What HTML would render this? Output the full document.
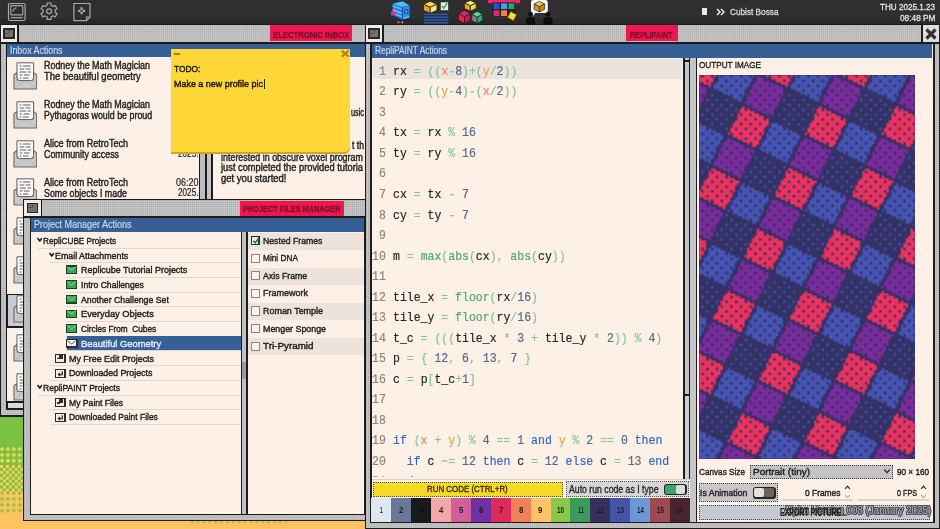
<!DOCTYPE html><html><head><meta charset="utf-8"><title>RepliPAINT</title><style>
html,body{margin:0;padding:0;overflow:hidden}
body{width:940px;height:529px;overflow:hidden;position:relative;background:#7cc242;font-family:"Liberation Sans",sans-serif}
div,span.t,span.c,svg{position:absolute}
span.t{white-space:pre;line-height:1;transform-origin:0 50%}
span.c{white-space:pre;line-height:1;font-family:"Liberation Mono",monospace;font-size:12.8px;color:#262626;transform:scaleX(.8984);transform-origin:0 0}
span.c b{font-weight:normal}
span.c{-webkit-text-stroke-width:.2px}
.dot{background-color:#d0d0d0;background-image:linear-gradient(90deg,rgba(0,0,0,.09) 50%,transparent 50%),linear-gradient(rgba(0,0,0,.09) 50%,transparent 50%);background-size:1.96px 1.96px}
</style></head><body><div id="root" style="left:0;top:0;width:940px;height:529px;overflow:hidden;will-change:transform">
<div style="left:0px;top:0px;width:940px;height:529px;background:#7cc242;"></div>
<div style="left:0px;top:447px;width:940px;height:17.6px;background-image:radial-gradient(circle at 2px 2px,#ecd750 1.5px,transparent 1.9px);background-size:5.9px 5.9px;"></div>
<div style="left:0px;top:464.5px;width:940px;height:26px;background:conic-gradient(#7cc242 25%,#f3cf58 0 50%,#7cc242 0 75%,#f3cf58 0) 0 0/5.9px 5.9px;"></div>
<div style="left:0px;top:490.5px;width:940px;height:40px;background:#ffc460;"></div>
<div style="left:0px;top:490.5px;width:940px;height:23.6px;background-image:radial-gradient(circle at 2px 2px,#98c446 1.5px,transparent 1.9px);background-size:5.9px 5.9px;"></div>
<div style="left:190px;top:519.5px;width:97px;height:4px;background-image:radial-gradient(circle at 2px 2px,#a2c548 1.3px,transparent 1.7px);background-size:5.9px 5.9px;"></div>
<div style="left:0px;top:0px;width:940px;height:24px;background:#2f2f2f;"></div>
<div style="left:0px;top:19px;width:940px;height:5px;background:#292929;"></div>
<div style="left:0px;top:23.7px;width:940px;height:1.3px;background:#141414;"></div>
<div style="left:0px;top:24px;width:372px;height:392.5px;background:#1c1c1c;"></div>
<div class="dot" style="left:1px;top:25px;width:370px;height:17px;"></div>
<div style="left:1px;top:25px;width:16.3px;height:17px;background:#ececec;"></div>
<div style="left:3.2px;top:28.1px;width:11.8px;height:10.8px;background:#2a2624;"></div>
<div style="left:4.8px;top:29.6px;width:8.6px;height:7.8px;background:#77716c;"></div>
<div style="left:8.5px;top:29.6px;width:1px;height:3.5px;background:#56504c;"></div>
<div style="left:4.8px;top:32.9px;width:4.5px;height:1px;background:#56504c;"></div>
<div style="left:17.3px;top:25px;width:1.5px;height:17px;background:#1c1c1c;"></div>
<div class="dot" style="left:1px;top:43.5px;width:370px;height:371.5px;"></div>
<div style="left:5.5px;top:43.5px;width:360.5px;height:366.3px;background:#1c1c1c;"></div>
<div style="left:7px;top:43.5px;width:357.5px;height:364.8px;background:#fdf1e7;"></div>
<div style="left:7px;top:43.5px;width:357.5px;height:13.8px;background:#365f96;"></div>
<span class="t" style="transform:scaleX(0.883);left:10px;top:46px;font-size:10px;color:#c9d6ea;-webkit-text-stroke:0.2px #c9d6ea;">Inbox Actions</span>
<div style="left:269.6px;top:25.4px;width:82.6px;height:15.8px;background:#ee184f;"></div>
<span class="t" style="transform:scaleX(0.827);left:273px;top:31px;font-size:9.3px;color:#7f0c30;font-weight:bold;-webkit-text-stroke:0.3px #7f0c30;">ELECTRONIC INBOX</span>
<div style="left:7px;top:294px;width:18px;height:33.5px;background:#1c1c1c;"></div>
<div style="left:8.2px;top:295.2px;width:17px;height:31px;background:#c9c9d1;"></div>
<svg style="left:12.6px;top:61.7px" width="24.6" height="28" viewBox="0 0 26 28" preserveAspectRatio="none">
<path d="M1 12.8 L4.5 10.3 L4.5 18 L21.5 18 L21.5 10.3 L25 12.8 L25 27 L1 27 Z" fill="#cacaca" stroke="#666" stroke-width="1.1"/>
<path d="M4.2 0.8 H21.8 V15.5 Q21.8 18.6 18.8 18.6 H7.2 Q4.2 18.6 4.2 15.5 Z" fill="#fbfbfb" stroke="#5a5a5a" stroke-width="1"/>
<path d="M7 4h2M10.5 4h8M7 7h5M13.5 7h5M7 10h7M15.5 10h3.5M7 13h3M11.5 13h6M7 16h2M10.5 16h6" stroke="#5c5c5c" stroke-width="1"/>
<path d="M2 26 L10 20 H16 L24 26" fill="none" stroke="#b6b6b6" stroke-width="1"/>
</svg>
<span class="t" style="transform:scaleX(0.883);left:44px;top:61px;font-size:10.1px;color:#222;-webkit-text-stroke:0.4px #222;">Rodney the Math Magician</span>
<span class="t" style="transform:scaleX(0.938);left:44px;top:72px;font-size:10.1px;color:#222;-webkit-text-stroke:0.4px #222;">The beautiful geometry</span>
<svg style="left:12.6px;top:100.6px" width="24.6" height="28" viewBox="0 0 26 28" preserveAspectRatio="none">
<path d="M1 12.8 L4.5 10.3 L4.5 18 L21.5 18 L21.5 10.3 L25 12.8 L25 27 L1 27 Z" fill="#cacaca" stroke="#666" stroke-width="1.1"/>
<path d="M4.2 0.8 H21.8 V15.5 Q21.8 18.6 18.8 18.6 H7.2 Q4.2 18.6 4.2 15.5 Z" fill="#fbfbfb" stroke="#5a5a5a" stroke-width="1"/>
<path d="M7 4h2M10.5 4h8M7 7h5M13.5 7h5M7 10h7M15.5 10h3.5M7 13h3M11.5 13h6M7 16h2M10.5 16h6" stroke="#5c5c5c" stroke-width="1"/>
<path d="M2 26 L10 20 H16 L24 26" fill="none" stroke="#b6b6b6" stroke-width="1"/>
</svg>
<span class="t" style="transform:scaleX(0.883);left:44px;top:100px;font-size:10.1px;color:#222;-webkit-text-stroke:0.4px #222;">Rodney the Math Magician</span>
<span class="t" style="transform:scaleX(0.881);left:44px;top:111px;font-size:10.1px;color:#222;-webkit-text-stroke:0.4px #222;">Pythagoras would be proud</span>
<svg style="left:12.6px;top:139.5px" width="24.6" height="28" viewBox="0 0 26 28" preserveAspectRatio="none">
<path d="M1 12.8 L4.5 10.3 L4.5 18 L21.5 18 L21.5 10.3 L25 12.8 L25 27 L1 27 Z" fill="#cacaca" stroke="#666" stroke-width="1.1"/>
<path d="M4.2 0.8 H21.8 V15.5 Q21.8 18.6 18.8 18.6 H7.2 Q4.2 18.6 4.2 15.5 Z" fill="#fbfbfb" stroke="#5a5a5a" stroke-width="1"/>
<path d="M7 4h2M10.5 4h8M7 7h5M13.5 7h5M7 10h7M15.5 10h3.5M7 13h3M11.5 13h6M7 16h2M10.5 16h6" stroke="#5c5c5c" stroke-width="1"/>
<path d="M2 26 L10 20 H16 L24 26" fill="none" stroke="#b6b6b6" stroke-width="1"/>
</svg>
<span class="t" style="transform:scaleX(0.897);left:44px;top:139px;font-size:10.1px;color:#222;-webkit-text-stroke:0.4px #222;">Alice from RetroTech</span>
<span class="t" style="transform:scaleX(0.880);left:44px;top:150px;font-size:10.1px;color:#222;-webkit-text-stroke:0.4px #222;">Community access</span>
<svg style="left:12.6px;top:178.39999999999998px" width="24.6" height="28" viewBox="0 0 26 28" preserveAspectRatio="none">
<path d="M1 12.8 L4.5 10.3 L4.5 18 L21.5 18 L21.5 10.3 L25 12.8 L25 27 L1 27 Z" fill="#cacaca" stroke="#666" stroke-width="1.1"/>
<path d="M4.2 0.8 H21.8 V15.5 Q21.8 18.6 18.8 18.6 H7.2 Q4.2 18.6 4.2 15.5 Z" fill="#fbfbfb" stroke="#5a5a5a" stroke-width="1"/>
<path d="M7 4h2M10.5 4h8M7 7h5M13.5 7h5M7 10h7M15.5 10h3.5M7 13h3M11.5 13h6M7 16h2M10.5 16h6" stroke="#5c5c5c" stroke-width="1"/>
<path d="M2 26 L10 20 H16 L24 26" fill="none" stroke="#b6b6b6" stroke-width="1"/>
</svg>
<span class="t" style="transform:scaleX(0.897);left:44px;top:178px;font-size:10.1px;color:#222;-webkit-text-stroke:0.4px #222;">Alice from RetroTech</span>
<span class="t" style="transform:scaleX(0.875);left:44px;top:189px;font-size:10.1px;color:#222;-webkit-text-stroke:0.4px #222;">Some objects I made</span>
<svg style="left:12.6px;top:217.3px" width="24.6" height="28" viewBox="0 0 26 28" preserveAspectRatio="none">
<path d="M1 12.8 L4.5 10.3 L4.5 18 L21.5 18 L21.5 10.3 L25 12.8 L25 27 L1 27 Z" fill="#cacaca" stroke="#666" stroke-width="1.1"/>
<path d="M4.2 0.8 H21.8 V15.5 Q21.8 18.6 18.8 18.6 H7.2 Q4.2 18.6 4.2 15.5 Z" fill="#fbfbfb" stroke="#5a5a5a" stroke-width="1"/>
<path d="M7 4h2M10.5 4h8M7 7h5M13.5 7h5M7 10h7M15.5 10h3.5M7 13h3M11.5 13h6M7 16h2M10.5 16h6" stroke="#5c5c5c" stroke-width="1"/>
<path d="M2 26 L10 20 H16 L24 26" fill="none" stroke="#b6b6b6" stroke-width="1"/>
</svg>
<svg style="left:12.6px;top:256.2px" width="24.6" height="28" viewBox="0 0 26 28" preserveAspectRatio="none">
<path d="M1 12.8 L4.5 10.3 L4.5 18 L21.5 18 L21.5 10.3 L25 12.8 L25 27 L1 27 Z" fill="#cacaca" stroke="#666" stroke-width="1.1"/>
<path d="M4.2 0.8 H21.8 V15.5 Q21.8 18.6 18.8 18.6 H7.2 Q4.2 18.6 4.2 15.5 Z" fill="#fbfbfb" stroke="#5a5a5a" stroke-width="1"/>
<path d="M7 4h2M10.5 4h8M7 7h5M13.5 7h5M7 10h7M15.5 10h3.5M7 13h3M11.5 13h6M7 16h2M10.5 16h6" stroke="#5c5c5c" stroke-width="1"/>
<path d="M2 26 L10 20 H16 L24 26" fill="none" stroke="#b6b6b6" stroke-width="1"/>
</svg>
<svg style="left:12.6px;top:295.09999999999997px" width="24.6" height="28" viewBox="0 0 26 28" preserveAspectRatio="none">
<path d="M1 12.8 L4.5 10.3 L4.5 18 L21.5 18 L21.5 10.3 L25 12.8 L25 27 L1 27 Z" fill="#cacaca" stroke="#666" stroke-width="1.1"/>
<path d="M4.2 0.8 H21.8 V15.5 Q21.8 18.6 18.8 18.6 H7.2 Q4.2 18.6 4.2 15.5 Z" fill="#fbfbfb" stroke="#5a5a5a" stroke-width="1"/>
<path d="M7 4h2M10.5 4h8M7 7h5M13.5 7h5M7 10h7M15.5 10h3.5M7 13h3M11.5 13h6M7 16h2M10.5 16h6" stroke="#5c5c5c" stroke-width="1"/>
<path d="M2 26 L10 20 H16 L24 26" fill="none" stroke="#b6b6b6" stroke-width="1"/>
</svg>
<svg style="left:12.6px;top:334.0px" width="24.6" height="28" viewBox="0 0 26 28" preserveAspectRatio="none">
<path d="M1 12.8 L4.5 10.3 L4.5 18 L21.5 18 L21.5 10.3 L25 12.8 L25 27 L1 27 Z" fill="#cacaca" stroke="#666" stroke-width="1.1"/>
<path d="M4.2 0.8 H21.8 V15.5 Q21.8 18.6 18.8 18.6 H7.2 Q4.2 18.6 4.2 15.5 Z" fill="#fbfbfb" stroke="#5a5a5a" stroke-width="1"/>
<path d="M7 4h2M10.5 4h8M7 7h5M13.5 7h5M7 10h7M15.5 10h3.5M7 13h3M11.5 13h6M7 16h2M10.5 16h6" stroke="#5c5c5c" stroke-width="1"/>
<path d="M2 26 L10 20 H16 L24 26" fill="none" stroke="#b6b6b6" stroke-width="1"/>
</svg>
<svg style="left:12.6px;top:372.9px" width="24.6" height="28" viewBox="0 0 26 28" preserveAspectRatio="none">
<path d="M1 12.8 L4.5 10.3 L4.5 18 L21.5 18 L21.5 10.3 L25 12.8 L25 27 L1 27 Z" fill="#cacaca" stroke="#666" stroke-width="1.1"/>
<path d="M4.2 0.8 H21.8 V15.5 Q21.8 18.6 18.8 18.6 H7.2 Q4.2 18.6 4.2 15.5 Z" fill="#fbfbfb" stroke="#5a5a5a" stroke-width="1"/>
<path d="M7 4h2M10.5 4h8M7 7h5M13.5 7h5M7 10h7M15.5 10h3.5M7 13h3M11.5 13h6M7 16h2M10.5 16h6" stroke="#5c5c5c" stroke-width="1"/>
<path d="M2 26 L10 20 H16 L24 26" fill="none" stroke="#b6b6b6" stroke-width="1"/>
</svg>
<span class="t" style="transform:scaleX(0.852);left:175.6px;top:177px;font-size:10.5px;color:#222;-webkit-text-stroke:0.2px #222;">06:20</span>
<span class="t" style="transform:scaleX(0.780);left:177.5px;top:187px;font-size:10.5px;color:#222;-webkit-text-stroke:0.2px #222;">2025.</span>
<span class="t" style="transform:scaleX(0.780);left:177.5px;top:148px;font-size:10.5px;color:#222;-webkit-text-stroke:0.2px #222;">2025.</span>
<div style="left:199px;top:58px;width:7.5px;height:343px;background:#1c1c1c;"></div>
<div style="left:200.3px;top:58px;width:4.7px;height:343px;background:#bcbcc2;"></div>
<div style="left:210.5px;top:58px;width:2px;height:343px;background:#1c1c1c;"></div>
<div style="left:206.5px;top:58px;width:4px;height:343px;background:#c4c4c4;"></div>
<span class="t" style="transform:scaleX(0.730);left:351px;top:108px;font-size:10px;color:#222;-webkit-text-stroke:0.4px #222;">usic</span>
<span class="t" style="transform:scaleX(0.863);left:352px;top:141px;font-size:10px;color:#222;-webkit-text-stroke:0.4px #222;">t th</span>
<span class="t" style="transform:scaleX(0.893);left:220.8px;top:153px;font-size:10px;color:#222;-webkit-text-stroke:0.4px #222;">interested in obscure voxel program</span>
<span class="t" style="transform:scaleX(0.929);left:220.8px;top:163px;font-size:10px;color:#222;-webkit-text-stroke:0.4px #222;">just completed the provided tutoria</span>
<span class="t" style="transform:scaleX(0.950);left:220.8px;top:174px;font-size:10px;color:#222;-webkit-text-stroke:0.4px #222;">get you started!</span>
<div style="left:7px;top:401px;width:18px;height:1.6px;background:#1c1c1c;"></div>
<div style="left:7px;top:402.6px;width:18px;height:5.8px;background:#d9d9db;"></div>
<div style="left:7px;top:402.5px;width:1.2px;height:5.9px;background:#1c1c1c;"></div>
<div style="left:170.6px;top:48.7px;width:179.8px;height:105px;background:#c9a822;border-radius:0 0 6px 0;"></div>
<div style="left:170.6px;top:48.7px;width:179.8px;height:103.6px;background:#ffd838;border-radius:0 0 6px 0;"></div>
<div style="left:173.5px;top:53.1px;width:6.5px;height:2.1px;background:#b9790f;"></div>
<span class="t" style="transform:scaleX(1.119);left:340.5px;top:47px;font-size:13px;color:#b9790f;font-weight:bold;-webkit-text-stroke:0.6px #b9790f;">×</span>
<span class="t" style="transform:scaleX(0.874);left:174.2px;top:64px;font-size:9.6px;color:#1e1a08;-webkit-text-stroke:0.45px #1e1a08;">TODO:</span>
<span class="t" style="transform:scaleX(0.932);left:174.2px;top:79px;font-size:9.6px;color:#1e1a08;-webkit-text-stroke:0.45px #1e1a08;">Make a new profile pic</span>
<div style="left:263.8px;top:78.5px;width:1px;height:10.5px;background:#2a2410;"></div>
<div style="left:23.2px;top:199px;width:348.8px;height:322px;background:#1c1c1c;"></div>
<div class="dot" style="left:24.4px;top:200px;width:346.4px;height:16px;"></div>
<div style="left:24.4px;top:200px;width:16.3px;height:16px;background:#ececec;"></div>
<div style="left:26.6px;top:202.6px;width:11.8px;height:10.8px;background:#2a2624;"></div>
<div style="left:28.2px;top:204.1px;width:8.6px;height:7.8px;background:#77716c;"></div>
<div style="left:31.9px;top:204.1px;width:1px;height:3.5px;background:#56504c;"></div>
<div style="left:28.2px;top:207.4px;width:4.5px;height:1px;background:#56504c;"></div>
<div style="left:40.7px;top:200px;width:1.5px;height:16px;background:#1c1c1c;"></div>
<div class="dot" style="left:24.4px;top:217.5px;width:346.4px;height:302px;"></div>
<div style="left:29.7px;top:217.5px;width:336.3px;height:297.5px;background:#1c1c1c;"></div>
<div style="left:31.2px;top:217.5px;width:333.3px;height:296px;background:#fdf1e7;"></div>
<div style="left:31.2px;top:217.5px;width:333.3px;height:14px;background:#365f96;"></div>
<span class="t" style="transform:scaleX(0.900);left:33.6px;top:220px;font-size:10px;color:#c9d6ea;-webkit-text-stroke:0.2px #c9d6ea;">Project Manager Actions</span>
<div style="left:240px;top:201px;width:104px;height:15px;background:#ee184f;"></div>
<span class="t" style="transform:scaleX(0.790);left:242.7px;top:205px;font-size:9.3px;color:#7f0c30;font-weight:bold;-webkit-text-stroke:0.3px #7f0c30;">PROJECT FILES MANAGER</span>
<div style="left:247.5px;top:232.5px;width:116px;height:17.3px;background:#ece4dc;"></div>
<div style="left:247.5px;top:267.7px;width:116px;height:17.3px;background:#ece4dc;"></div>
<div style="left:247.5px;top:302.9px;width:116px;height:17.3px;background:#ece4dc;"></div>
<div style="left:247.5px;top:338.1px;width:116px;height:17.3px;background:#ece4dc;"></div>
<div style="left:240.5px;top:232px;width:7px;height:281.5px;background:#1c1c1c;"></div>
<div style="left:242px;top:232px;width:4px;height:281.5px;background:#bfc1c7;"></div>
<div style="left:242px;top:361.5px;width:4px;height:17.5px;background:#9a9a9c;"></div>
<div style="left:37.5px;top:247.5px;width:203px;height:1px;background:#e0d8d0;"></div>
<svg style="left:36.5px;top:237.3px" width="5.6" height="5.4" viewBox="0 0 5 5"><path d="M0.3 1 L2.5 3.6 L4.7 1" fill="none" stroke="#222" stroke-width="1.5"/></svg>
<span class="t" style="transform:scaleX(0.833);left:42.6px;top:236px;font-size:9.8px;color:#222;-webkit-text-stroke:0.42px #222;">RepliCUBE Projects</span>
<div style="left:49.5px;top:262.2px;width:191px;height:1px;background:#e0d8d0;"></div>
<svg style="left:48.5px;top:252.00000000000003px" width="5.6" height="5.4" viewBox="0 0 5 5"><path d="M0.3 1 L2.5 3.6 L4.7 1" fill="none" stroke="#222" stroke-width="1.5"/></svg>
<span class="t" style="transform:scaleX(0.903);left:54.6px;top:251px;font-size:9.8px;color:#222;-webkit-text-stroke:0.42px #222;">Email Attachments</span>
<div style="left:66px;top:276.9px;width:174.5px;height:1px;background:#e0d8d0;"></div>
<div style="left:66.2px;top:265.4px;width:11px;height:8.8px;background:#163f20;"></div>
<div style="left:67.4px;top:266.6px;width:8.6px;height:6.4px;background:#3aa652;"></div>
<svg style="left:67.3px;top:266.3px" width="9" height="7" viewBox="0 0 9 7"><path d="M0.5 0.8 L4.5 4 L8.5 0.8" fill="none" stroke="#8fe0a0" stroke-width="1"/></svg>
<span class="t" style="transform:scaleX(0.912);left:80.9px;top:265px;font-size:9.8px;color:#222;-webkit-text-stroke:0.42px #222;">Replicube Tutorial Projects</span>
<div style="left:66px;top:291.6px;width:174.5px;height:1px;background:#e0d8d0;"></div>
<div style="left:66.2px;top:280.1px;width:11px;height:8.8px;background:#163f20;"></div>
<div style="left:67.4px;top:281.3px;width:8.6px;height:6.4px;background:#3aa652;"></div>
<svg style="left:67.3px;top:281.0px" width="9" height="7" viewBox="0 0 9 7"><path d="M0.5 0.8 L4.5 4 L8.5 0.8" fill="none" stroke="#8fe0a0" stroke-width="1"/></svg>
<span class="t" style="transform:scaleX(0.880);left:80.9px;top:280px;font-size:9.8px;color:#222;-webkit-text-stroke:0.42px #222;">Intro Challenges</span>
<div style="left:66px;top:306.3px;width:174.5px;height:1px;background:#e0d8d0;"></div>
<div style="left:66.2px;top:294.8px;width:11px;height:8.8px;background:#163f20;"></div>
<div style="left:67.4px;top:296px;width:8.6px;height:6.4px;background:#3aa652;"></div>
<svg style="left:67.3px;top:295.7px" width="9" height="7" viewBox="0 0 9 7"><path d="M0.5 0.8 L4.5 4 L8.5 0.8" fill="none" stroke="#8fe0a0" stroke-width="1"/></svg>
<span class="t" style="transform:scaleX(0.891);left:80.9px;top:295px;font-size:9.8px;color:#222;-webkit-text-stroke:0.42px #222;">Another Challenge Set</span>
<div style="left:66px;top:321px;width:174.5px;height:1px;background:#e0d8d0;"></div>
<div style="left:66.2px;top:309.5px;width:11px;height:8.8px;background:#163f20;"></div>
<div style="left:67.4px;top:310.7px;width:8.6px;height:6.4px;background:#3aa652;"></div>
<svg style="left:67.3px;top:310.4px" width="9" height="7" viewBox="0 0 9 7"><path d="M0.5 0.8 L4.5 4 L8.5 0.8" fill="none" stroke="#8fe0a0" stroke-width="1"/></svg>
<span class="t" style="transform:scaleX(0.948);left:80.9px;top:309px;font-size:9.8px;color:#222;-webkit-text-stroke:0.42px #222;">Everyday Objects</span>
<div style="left:66px;top:335.7px;width:174.5px;height:1px;background:#e0d8d0;"></div>
<div style="left:66.2px;top:324.2px;width:11px;height:8.8px;background:#163f20;"></div>
<div style="left:67.4px;top:325.4px;width:8.6px;height:6.4px;background:#3aa652;"></div>
<svg style="left:67.3px;top:325.1px" width="9" height="7" viewBox="0 0 9 7"><path d="M0.5 0.8 L4.5 4 L8.5 0.8" fill="none" stroke="#8fe0a0" stroke-width="1"/></svg>
<span class="t" style="transform:scaleX(0.841);left:80.9px;top:324px;font-size:9.8px;color:#222;-webkit-text-stroke:0.42px #222;">Circles From  Cubes</span>
<div style="left:66px;top:350.4px;width:174.5px;height:1px;background:#e0d8d0;"></div>
<div style="left:66.5px;top:336.2px;width:174px;height:14.2px;background:#365f96;"></div>
<div style="left:66px;top:338.5px;width:11.6px;height:9.3px;background:#2b2b2b;"></div>
<div style="left:67.3px;top:339.8px;width:9px;height:6.7px;background:#f4f4f4;"></div>
<svg style="left:67.3px;top:339.8px" width="9" height="7" viewBox="0 0 9 7"><path d="M0.5 0.8 L4.5 4 L8.5 0.8" fill="none" stroke="#555" stroke-width="1"/></svg>
<span class="t" style="transform:scaleX(0.955);left:80.9px;top:339px;font-size:9.8px;color:#dfe8f5;-webkit-text-stroke:0.42px #dfe8f5;">Beautiful Geometry</span>
<div style="left:49.5px;top:365.1px;width:191px;height:1px;background:#e0d8d0;"></div>
<div style="left:54.7px;top:353.8px;width:11px;height:9.3px;background:#2b2b2b;"></div>
<div style="left:55.9px;top:355px;width:8.6px;height:6.9px;background:#f2efec;"></div>
<div style="left:58.7px;top:355px;width:4.5px;height:4px;background:#2b2b2b;"></div>
<div style="left:57.2px;top:358.3px;width:3px;height:1.2px;background:#2b2b2b;"></div>
<span class="t" style="transform:scaleX(0.908);left:68.8px;top:354px;font-size:9.8px;color:#222;-webkit-text-stroke:0.42px #222;">My Free Edit Projects</span>
<div style="left:49.5px;top:379.8px;width:191px;height:1px;background:#e0d8d0;"></div>
<div style="left:54.7px;top:368.5px;width:11px;height:9.3px;background:#2b2b2b;"></div>
<div style="left:55.9px;top:369.7px;width:8.6px;height:6.9px;background:#f2efec;"></div>
<svg style="left:55.900000000000006px;top:369.7px" width="9" height="7" viewBox="0 0 9 7"><path d="M6.3 1.2 V4.6 H2.5 M4 3 L2.4 4.6 L4 6.2" fill="none" stroke="#2b2b2b" stroke-width="1.2"/></svg>
<span class="t" style="transform:scaleX(0.900);left:68.8px;top:368px;font-size:9.8px;color:#222;-webkit-text-stroke:0.42px #222;">Downloaded Projects</span>
<div style="left:37.5px;top:394.5px;width:203px;height:1px;background:#e0d8d0;"></div>
<svg style="left:36.5px;top:384.29999999999995px" width="5.6" height="5.4" viewBox="0 0 5 5"><path d="M0.3 1 L2.5 3.6 L4.7 1" fill="none" stroke="#222" stroke-width="1.5"/></svg>
<span class="t" style="transform:scaleX(0.871);left:42.6px;top:383px;font-size:9.8px;color:#222;-webkit-text-stroke:0.42px #222;">RepliPAINT Projects</span>
<div style="left:49.5px;top:409.2px;width:191px;height:1px;background:#e0d8d0;"></div>
<div style="left:54.7px;top:397.9px;width:11px;height:9.3px;background:#2b2b2b;"></div>
<div style="left:55.9px;top:399.1px;width:8.6px;height:6.9px;background:#f2efec;"></div>
<div style="left:58.7px;top:399.1px;width:4.5px;height:4px;background:#2b2b2b;"></div>
<div style="left:57.2px;top:402.4px;width:3px;height:1.2px;background:#2b2b2b;"></div>
<span class="t" style="transform:scaleX(0.878);left:68.8px;top:398px;font-size:9.8px;color:#222;-webkit-text-stroke:0.42px #222;">My Paint Files</span>
<div style="left:49.5px;top:423.9px;width:191px;height:1px;background:#e0d8d0;"></div>
<div style="left:54.7px;top:412.6px;width:11px;height:9.3px;background:#2b2b2b;"></div>
<div style="left:55.9px;top:413.8px;width:8.6px;height:6.9px;background:#f2efec;"></div>
<svg style="left:55.900000000000006px;top:413.79999999999995px" width="9" height="7" viewBox="0 0 9 7"><path d="M6.3 1.2 V4.6 H2.5 M4 3 L2.4 4.6 L4 6.2" fill="none" stroke="#2b2b2b" stroke-width="1.2"/></svg>
<span class="t" style="transform:scaleX(0.863);left:68.8px;top:412px;font-size:9.8px;color:#222;-webkit-text-stroke:0.42px #222;">Downloaded Paint Files</span>
<div style="left:250.5px;top:236px;width:9.2px;height:9.2px;background:#1c3a24;"></div>
<div style="left:251.8px;top:237.3px;width:6.6px;height:6.6px;background:#e6f2e4;"></div>
<svg style="left:250.5px;top:236.0px" width="10" height="10" viewBox="0 0 10 10"><path d="M2.3 4.8 L4.2 6.8 L7.8 2.3" fill="none" stroke="#1f7a3a" stroke-width="1.6"/></svg>
<span class="t" style="transform:scaleX(0.888);left:262.5px;top:236px;font-size:9.8px;color:#222;-webkit-text-stroke:0.42px #222;">Nested Frames</span>
<div style="left:250.5px;top:253.6px;width:9.2px;height:9.2px;background:#8a8682;"></div>
<div style="left:251.5px;top:254.6px;width:7.2px;height:7.2px;background:#fbf3ea;"></div>
<span class="t" style="transform:scaleX(0.846);left:262.5px;top:253px;font-size:9.8px;color:#222;-webkit-text-stroke:0.42px #222;">Mini DNA</span>
<div style="left:250.5px;top:271.2px;width:9.2px;height:9.2px;background:#8a8682;"></div>
<div style="left:251.5px;top:272.2px;width:7.2px;height:7.2px;background:#fbf3ea;"></div>
<span class="t" style="transform:scaleX(0.892);left:262.5px;top:271px;font-size:9.8px;color:#222;-webkit-text-stroke:0.42px #222;">Axis Frame</span>
<div style="left:250.5px;top:288.8px;width:9.2px;height:9.2px;background:#8a8682;"></div>
<div style="left:251.5px;top:289.8px;width:7.2px;height:7.2px;background:#fbf3ea;"></div>
<span class="t" style="transform:scaleX(0.918);left:262.5px;top:288px;font-size:9.8px;color:#222;-webkit-text-stroke:0.42px #222;">Framework</span>
<div style="left:250.5px;top:306.4px;width:9.2px;height:9.2px;background:#8a8682;"></div>
<div style="left:251.5px;top:307.4px;width:7.2px;height:7.2px;background:#fbf3ea;"></div>
<span class="t" style="transform:scaleX(0.913);left:262.5px;top:306px;font-size:9.8px;color:#222;-webkit-text-stroke:0.42px #222;">Roman Temple</span>
<div style="left:250.5px;top:324px;width:9.2px;height:9.2px;background:#8a8682;"></div>
<div style="left:251.5px;top:325px;width:7.2px;height:7.2px;background:#fbf3ea;"></div>
<span class="t" style="transform:scaleX(0.904);left:262.5px;top:324px;font-size:9.8px;color:#222;-webkit-text-stroke:0.42px #222;">Menger Sponge</span>
<div style="left:250.5px;top:341.6px;width:9.2px;height:9.2px;background:#8a8682;"></div>
<div style="left:251.5px;top:342.6px;width:7.2px;height:7.2px;background:#fbf3ea;"></div>
<span class="t" style="transform:scaleX(1.005);left:262.5px;top:341px;font-size:9.8px;color:#222;-webkit-text-stroke:0.42px #222;">Tri-Pyramid</span>
<div style="left:364.5px;top:24px;width:576px;height:505px;background:#1c1c1c;"></div>
<div class="dot" style="left:366px;top:25px;width:573px;height:17px;"></div>
<div style="left:366px;top:25px;width:16.3px;height:17px;background:#ececec;"></div>
<div style="left:368.2px;top:28.1px;width:11.8px;height:10.8px;background:#2a2624;"></div>
<div style="left:369.8px;top:29.6px;width:8.6px;height:7.8px;background:#77716c;"></div>
<div style="left:373.5px;top:29.6px;width:1px;height:3.5px;background:#56504c;"></div>
<div style="left:369.8px;top:32.9px;width:4.5px;height:1px;background:#56504c;"></div>
<div style="left:382.3px;top:25px;width:1.5px;height:17px;background:#1c1c1c;"></div>
<div class="dot" style="left:366px;top:43.5px;width:573px;height:484px;"></div>
<div style="left:370px;top:43.5px;width:564.7px;height:479.5px;background:#1c1c1c;"></div>
<div style="left:371.5px;top:43.5px;width:561.7px;height:478px;background:#fdf1e7;"></div>
<div style="left:371.5px;top:43.5px;width:560.4px;height:14px;background:#365f96;"></div>
<span class="t" style="transform:scaleX(0.834);left:374.5px;top:46px;font-size:10px;color:#c9d6ea;-webkit-text-stroke:0.2px #c9d6ea;">RepliPAINT Actions</span>
<div style="left:626.4px;top:25.4px;width:52px;height:15.8px;background:#ee184f;"></div>
<span class="t" style="transform:scaleX(0.784);left:630px;top:31px;font-size:9.3px;color:#7f0c30;font-weight:bold;-webkit-text-stroke:0.3px #7f0c30;">REPLIPAINT</span>
<div style="left:921.3px;top:25px;width:1.5px;height:16.5px;background:#1c1c1c;"></div>
<div style="left:922.8px;top:25px;width:16.5px;height:16.5px;background:#dedede;"></div>
<svg style="left:924px;top:26.5px" width="14" height="14" viewBox="0 0 14 14"><path d="M2.5 2.5 L11.5 11.5 M11.5 2.5 L2.5 11.5" stroke="#333" stroke-width="3.2"/></svg>
<div style="left:371.5px;top:59.2px;width:310px;height:20.3px;background:#ece4dc;"></div>
<div style="left:683.2px;top:58px;width:7px;height:421.5px;background:#1c1c1c;"></div>
<div style="left:684.6px;top:58px;width:4px;height:421.5px;background:#c1c4cb;"></div>
<div style="left:684.6px;top:60px;width:4px;height:1.5px;background:#1c1c1c;"></div>
<div style="left:684.6px;top:394.3px;width:4px;height:1.5px;background:#1c1c1c;"></div>
<div style="left:684.6px;top:395.8px;width:4px;height:83.5px;background:#cdcfd4;"></div>
<div style="left:690.2px;top:58px;width:5.5px;height:464px;background:#c6c6c6;"></div>
<div style="left:695.6px;top:58px;width:1.6px;height:464px;background:#1c1c1c;"></div>
<div style="left:371.5px;top:479.3px;width:319px;height:1.2px;background:#d9d1c8;"></div>
<div style="left:371.5px;top:58px;width:311.5px;height:419.4px;overflow:hidden;"><div style="left:-371.5px;top:-58px;width:940px;height:529px"><span class="c" style="left:379.2px;top:66px;color:#8a8682">1</span><span class="c" style="left:393px;top:66px"><b style="color:#262626">rx</b> <b style="color:#84c4a0">=</b> <b style="color:#84c4a0">(</b><b style="color:#84c4a0">(</b><b style="color:#f0885a">x</b><b style="color:#84c4a0">-</b><b style="color:#56688c">8</b><b style="color:#84c4a0">)</b><b style="color:#84c4a0">+</b><b style="color:#84c4a0">(</b><b style="color:#e2a443">y</b><b style="color:#84c4a0">/</b><b style="color:#56688c">2</b><b style="color:#84c4a0">)</b><b style="color:#84c4a0">)</b></span><span class="c" style="left:379.2px;top:86px;color:#8a8682">2</span><span class="c" style="left:393px;top:86px"><b style="color:#262626">ry</b> <b style="color:#84c4a0">=</b> <b style="color:#84c4a0">(</b><b style="color:#84c4a0">(</b><b style="color:#e2a443">y</b><b style="color:#84c4a0">-</b><b style="color:#56688c">4</b><b style="color:#84c4a0">)</b><b style="color:#84c4a0">-</b><b style="color:#84c4a0">(</b><b style="color:#f0885a">x</b><b style="color:#84c4a0">/</b><b style="color:#56688c">2</b><b style="color:#84c4a0">)</b><b style="color:#84c4a0">)</b></span><span class="c" style="left:379.2px;top:107px;color:#8a8682">3</span><span class="c" style="left:379.2px;top:127px;color:#8a8682">4</span><span class="c" style="left:393px;top:127px"><b style="color:#262626">tx</b> <b style="color:#84c4a0">=</b> <b style="color:#262626">rx</b> <b style="color:#84c4a0">%</b> <b style="color:#56688c">16</b></span><span class="c" style="left:379.2px;top:148px;color:#8a8682">5</span><span class="c" style="left:393px;top:148px"><b style="color:#262626">ty</b> <b style="color:#84c4a0">=</b> <b style="color:#262626">ry</b> <b style="color:#84c4a0">%</b> <b style="color:#56688c">16</b></span><span class="c" style="left:379.2px;top:168px;color:#8a8682">6</span><span class="c" style="left:379.2px;top:189px;color:#8a8682">7</span><span class="c" style="left:393px;top:189px"><b style="color:#262626">cx</b> <b style="color:#84c4a0">=</b> <b style="color:#262626">tx</b> <b style="color:#84c4a0">-</b> <b style="color:#56688c">7</b></span><span class="c" style="left:379.2px;top:210px;color:#8a8682">8</span><span class="c" style="left:393px;top:210px"><b style="color:#262626">cy</b> <b style="color:#84c4a0">=</b> <b style="color:#262626">ty</b> <b style="color:#84c4a0">-</b> <b style="color:#56688c">7</b></span><span class="c" style="left:379.2px;top:230px;color:#8a8682">9</span><span class="c" style="left:372.3px;top:251px;color:#8a8682">10</span><span class="c" style="left:393px;top:251px"><b style="color:#262626">m</b> <b style="color:#84c4a0">=</b> <b style="color:#48a878">max</b><b style="color:#84c4a0">(</b><b style="color:#48a878">abs</b><b style="color:#84c4a0">(</b><b style="color:#262626">cx</b><b style="color:#84c4a0">)</b><b style="color:#84c4a0">,</b> <b style="color:#48a878">abs</b><b style="color:#84c4a0">(</b><b style="color:#262626">cy</b><b style="color:#84c4a0">)</b><b style="color:#84c4a0">)</b></span><span class="c" style="left:372.3px;top:271px;color:#8a8682">11</span><span class="c" style="left:372.3px;top:292px;color:#8a8682">12</span><span class="c" style="left:393px;top:292px"><b style="color:#262626">tile_x</b> <b style="color:#84c4a0">=</b> <b style="color:#48a878">floor</b><b style="color:#84c4a0">(</b><b style="color:#262626">rx</b><b style="color:#84c4a0">/</b><b style="color:#56688c">16</b><b style="color:#84c4a0">)</b></span><span class="c" style="left:372.3px;top:312px;color:#8a8682">13</span><span class="c" style="left:393px;top:312px"><b style="color:#262626">tile_y</b> <b style="color:#84c4a0">=</b> <b style="color:#48a878">floor</b><b style="color:#84c4a0">(</b><b style="color:#262626">ry</b><b style="color:#84c4a0">/</b><b style="color:#56688c">16</b><b style="color:#84c4a0">)</b></span><span class="c" style="left:372.3px;top:333px;color:#8a8682">14</span><span class="c" style="left:393px;top:333px"><b style="color:#262626">t_c</b> <b style="color:#84c4a0">=</b> <b style="color:#84c4a0">(</b><b style="color:#84c4a0">(</b><b style="color:#84c4a0">(</b><b style="color:#262626">tile_x</b> <b style="color:#84c4a0">*</b> <b style="color:#56688c">3</b> <b style="color:#84c4a0">+</b> <b style="color:#262626">tile_y</b> <b style="color:#84c4a0">*</b> <b style="color:#56688c">2</b><b style="color:#84c4a0">)</b><b style="color:#84c4a0">)</b> <b style="color:#84c4a0">%</b> <b style="color:#56688c">4</b><b style="color:#84c4a0">)</b></span><span class="c" style="left:372.3px;top:353px;color:#8a8682">15</span><span class="c" style="left:393px;top:353px"><b style="color:#262626">p</b> <b style="color:#84c4a0">=</b> <b style="color:#84c4a0">{</b> <b style="color:#56688c">12</b><b style="color:#84c4a0">,</b> <b style="color:#56688c">6</b><b style="color:#84c4a0">,</b> <b style="color:#56688c">13</b><b style="color:#84c4a0">,</b> <b style="color:#56688c">7</b> <b style="color:#84c4a0">}</b></span><span class="c" style="left:372.3px;top:374px;color:#8a8682">16</span><span class="c" style="left:393px;top:374px"><b style="color:#262626">c</b> <b style="color:#84c4a0">=</b> <b style="color:#262626">p</b><b style="color:#84c4a0">[</b><b style="color:#262626">t_c</b><b style="color:#84c4a0">+</b><b style="color:#56688c">1</b><b style="color:#84c4a0">]</b></span><span class="c" style="left:372.3px;top:394px;color:#8a8682">17</span><span class="c" style="left:372.3px;top:415px;color:#8a8682">18</span><span class="c" style="left:372.3px;top:435px;color:#8a8682">19</span><span class="c" style="left:393px;top:435px"><b style="color:#3366c8">if</b> <b style="color:#84c4a0">(</b><b style="color:#f0885a">x</b> <b style="color:#84c4a0">+</b> <b style="color:#e2a443">y</b><b style="color:#84c4a0">)</b> <b style="color:#84c4a0">%</b> <b style="color:#56688c">4</b> <b style="color:#84c4a0">=</b><b style="color:#84c4a0">=</b> <b style="color:#56688c">1</b> <b style="color:#3366c8">and</b> <b style="color:#e2a443">y</b> <b style="color:#84c4a0">%</b> <b style="color:#56688c">2</b> <b style="color:#84c4a0">=</b><b style="color:#84c4a0">=</b> <b style="color:#56688c">0</b> <b style="color:#3366c8">then</b></span><span class="c" style="left:372.3px;top:456px;color:#8a8682">20</span><span class="c" style="left:393px;top:456px">  <b style="color:#3366c8">if</b> <b style="color:#262626">c</b> <b style="color:#84c4a0">~</b><b style="color:#84c4a0">=</b> <b style="color:#56688c">12</b> <b style="color:#3366c8">then</b> <b style="color:#262626">c</b> <b style="color:#84c4a0">=</b> <b style="color:#56688c">12</b> <b style="color:#3366c8">else</b> <b style="color:#262626">c</b> <b style="color:#84c4a0">=</b> <b style="color:#56688c">13</b> <b style="color:#3366c8">end</b></span><span class="c" style="left:372.3px;top:476px;color:#8a8682">21</span><span class="c" style="left:393px;top:476px"><b style="color:#3366c8">end</b></span></div></div>
<div style="left:373.3px;top:481.5px;width:189.5px;height:15.3px;background:#f6d925;outline:1px dotted #5c5210;outline-offset:-1px;"></div>
<span class="t" style="transform:scaleX(0.845);left:427px;top:484px;font-size:9.4px;color:#2a2608;-webkit-text-stroke:0.3px #2a2608;">RUN CODE (CTRL+R)</span>
<div style="left:566px;top:481.3px;width:123px;height:15.5px;background:#d9d7d6;outline:1px dotted #555;outline-offset:-1px;"></div>
<span class="t" style="transform:scaleX(0.870);left:569px;top:485px;font-size:10px;color:#222;-webkit-text-stroke:0.3px #222;">Auto run code as I type</span>
<div style="left:663.5px;top:484px;width:23px;height:11px;background:#23262a;border-radius:3px;"></div>
<div style="left:664.8px;top:485.3px;width:20.4px;height:8.4px;background:#3aa862;border-radius:2px;"></div>
<div style="left:675.5px;top:485.3px;width:9.7px;height:8.4px;background:#dcdcdc;border-radius:2px;"></div>
<div style="left:371.4px;top:498px;width:20px;height:24px;background:#dfe7f2;"></div>
<span class="t" style="transform:scaleX(0.491);left:380.1px;top:505px;font-size:9.5px;color:#1d1d22;font-weight:bold;">1</span>
<div style="left:391.3px;top:498px;width:20px;height:24px;background:#6a7796;"></div>
<span class="t" style="transform:scaleX(0.831);left:399.1px;top:505px;font-size:9.5px;color:#1d1d22;font-weight:bold;">2</span>
<div style="left:411.2px;top:498px;width:20px;height:24px;background:#17191b;"></div>
<span class="t" style="transform:scaleX(0.831);left:419px;top:505px;font-size:9.5px;color:#0c0c0c;font-weight:bold;">3</span>
<div style="left:431.1px;top:498px;width:20px;height:24px;background:#f4a6a8;"></div>
<span class="t" style="transform:scaleX(0.831);left:438.9px;top:505px;font-size:9.5px;color:#1d1d22;font-weight:bold;">4</span>
<div style="left:451px;top:498px;width:20px;height:24px;background:#d0609c;"></div>
<span class="t" style="transform:scaleX(0.831);left:458.8px;top:505px;font-size:9.5px;color:#1d1d22;font-weight:bold;">5</span>
<div style="left:470.9px;top:498px;width:20px;height:24px;background:#7030a2;"></div>
<span class="t" style="transform:scaleX(0.831);left:478.7px;top:505px;font-size:9.5px;color:#1d1d22;font-weight:bold;">6</span>
<div style="left:490.8px;top:498px;width:20px;height:24px;background:#e12a5c;"></div>
<span class="t" style="transform:scaleX(0.831);left:498.6px;top:505px;font-size:9.5px;color:#1d1d22;font-weight:bold;">7</span>
<div style="left:510.7px;top:498px;width:20px;height:24px;background:#f08058;"></div>
<span class="t" style="transform:scaleX(0.831);left:518.5px;top:505px;font-size:9.5px;color:#1d1d22;font-weight:bold;">8</span>
<div style="left:530.6px;top:498px;width:20px;height:24px;background:#ffc468;"></div>
<span class="t" style="transform:scaleX(0.831);left:538.4px;top:505px;font-size:9.5px;color:#1d1d22;font-weight:bold;">9</span>
<div style="left:550.5px;top:498px;width:20px;height:24px;background:#88c848;"></div>
<span class="t" style="transform:scaleX(0.662);left:557px;top:505px;font-size:9.5px;color:#1d1d22;font-weight:bold;">10</span>
<div style="left:570.4px;top:498px;width:20px;height:24px;background:#3a9c58;"></div>
<span class="t" style="transform:scaleX(0.557);left:577.6px;top:505px;font-size:9.5px;color:#1d1d22;font-weight:bold;">11</span>
<div style="left:590.3px;top:498px;width:20px;height:24px;background:#35305e;"></div>
<span class="t" style="transform:scaleX(0.662);left:596.8px;top:505px;font-size:9.5px;color:#1d1d22;font-weight:bold;">12</span>
<div style="left:610.2px;top:498px;width:20px;height:24px;background:#4654a8;"></div>
<span class="t" style="transform:scaleX(0.662);left:616.7px;top:505px;font-size:9.5px;color:#1d1d22;font-weight:bold;">13</span>
<div style="left:630.1px;top:498px;width:20px;height:24px;background:#6c98d8;"></div>
<span class="t" style="transform:scaleX(0.662);left:636.6px;top:505px;font-size:9.5px;color:#1d1d22;font-weight:bold;">14</span>
<div style="left:650px;top:498px;width:20px;height:24px;background:#9c4c50;"></div>
<span class="t" style="transform:scaleX(0.662);left:656.5px;top:505px;font-size:9.5px;color:#1d1d22;font-weight:bold;">15</span>
<div style="left:669.9px;top:498px;width:20px;height:24px;background:#48242e;"></div>
<span class="t" style="transform:scaleX(0.662);left:676.4px;top:505px;font-size:9.5px;color:#1d1d22;font-weight:bold;">16</span>
<span class="t" style="transform:scaleX(0.833);left:699px;top:60px;font-size:9.8px;color:#1c1c1c;-webkit-text-stroke:0.35px #1c1c1c;">OUTPUT IMAGE</span>
<div style="left:699.2px;top:74.7px;width:216.3px;height:384px;background:#343264;"></div>
<svg style="left:699.2px;top:74.7px" width="216.3" height="384" viewBox="0 0 90 160" preserveAspectRatio="none"><defs><g id="pimg"><rect x="-1" y="-1" width="92" height="162" fill="#343264"/><path fill="#7a2c9c" d="M24 0h1v1h-1zM56 0h1v1h-1zM88 0h1v1h-1zM24 1h3v1h-3zM56 1h3v1h-3zM88 1h2v1h-2zM24 2h3v1h-3zM28 2h1v1h-1zM56 2h3v1h-3zM60 2h1v1h-1zM88 2h2v1h-2zM23 3h8v1h-8zM55 3h8v1h-8zM87 3h3v1h-3zM0 4h1v1h-1zM22 4h3v1h-3zM26 4h3v1h-3zM30 4h3v1h-3zM54 4h3v1h-3zM58 4h3v1h-3zM62 4h3v1h-3zM86 4h3v1h-3zM0 5h3v1h-3zM22 5h13v1h-13zM54 5h13v1h-13zM86 5h4v1h-4zM0 6h3v1h-3zM21 6h2v1h-2zM24 6h3v1h-3zM28 6h3v1h-3zM32 6h3v1h-3zM53 6h2v1h-2zM56 6h3v1h-3zM60 6h3v1h-3zM64 6h3v1h-3zM85 6h2v1h-2zM88 6h2v1h-2zM0 7h3v1h-3zM21 7h14v1h-14zM53 7h14v1h-14zM85 7h5v1h-5zM0 8h1v1h-1zM2 8h1v1h-1zM20 8h1v1h-1zM22 8h3v1h-3zM26 8h3v1h-3zM30 8h3v1h-3zM34 8h1v1h-1zM52 8h1v1h-1zM54 8h3v1h-3zM58 8h3v1h-3zM62 8h3v1h-3zM66 8h1v1h-1zM84 8h1v1h-1zM86 8h3v1h-3zM0 9h2v1h-2zM20 9h14v1h-14zM52 9h14v1h-14zM84 9h6v1h-6zM0 10h2v1h-2zM20 10h3v1h-3zM24 10h3v1h-3zM28 10h3v1h-3zM32 10h2v1h-2zM52 10h3v1h-3zM56 10h3v1h-3zM60 10h3v1h-3zM64 10h2v1h-2zM84 10h3v1h-3zM88 10h2v1h-2zM0 11h1v1h-1zM19 11h14v1h-14zM51 11h14v1h-14zM83 11h7v1h-7zM0 12h1v1h-1zM20 12h1v1h-1zM22 12h3v1h-3zM26 12h3v1h-3zM30 12h3v1h-3zM52 12h1v1h-1zM54 12h3v1h-3zM58 12h3v1h-3zM62 12h3v1h-3zM84 12h1v1h-1zM86 12h3v1h-3zM22 13h10v1h-10zM54 13h10v1h-10zM86 13h4v1h-4zM24 14h3v1h-3zM28 14h3v1h-3zM56 14h3v1h-3zM60 14h3v1h-3zM88 14h2v1h-2zM26 15h5v1h-5zM58 15h5v1h-5zM28 16h1v1h-1zM30 16h1v1h-1zM60 16h1v1h-1zM62 16h1v1h-1zM12 26h1v1h-1zM44 26h1v1h-1zM76 26h1v1h-1zM11 27h4v1h-4zM43 27h4v1h-4zM75 27h4v1h-4zM10 28h3v1h-3zM14 28h3v1h-3zM42 28h3v1h-3zM46 28h3v1h-3zM74 28h3v1h-3zM78 28h3v1h-3zM10 29h9v1h-9zM42 29h9v1h-9zM74 29h9v1h-9zM9 30h2v1h-2zM12 30h3v1h-3zM16 30h3v1h-3zM20 30h1v1h-1zM41 30h2v1h-2zM44 30h3v1h-3zM48 30h3v1h-3zM52 30h1v1h-1zM73 30h2v1h-2zM76 30h3v1h-3zM80 30h3v1h-3zM84 30h1v1h-1zM9 31h14v1h-14zM41 31h14v1h-14zM73 31h14v1h-14zM8 32h1v1h-1zM10 32h3v1h-3zM14 32h3v1h-3zM18 32h3v1h-3zM22 32h1v1h-1zM40 32h1v1h-1zM42 32h3v1h-3zM46 32h3v1h-3zM50 32h3v1h-3zM54 32h1v1h-1zM72 32h1v1h-1zM74 32h3v1h-3zM78 32h3v1h-3zM82 32h3v1h-3zM86 32h1v1h-1zM8 33h14v1h-14zM40 33h14v1h-14zM72 33h14v1h-14zM8 34h3v1h-3zM12 34h3v1h-3zM16 34h3v1h-3zM20 34h2v1h-2zM40 34h3v1h-3zM44 34h3v1h-3zM48 34h3v1h-3zM52 34h2v1h-2zM72 34h3v1h-3zM76 34h3v1h-3zM80 34h3v1h-3zM84 34h2v1h-2zM7 35h14v1h-14zM39 35h14v1h-14zM71 35h14v1h-14zM6 36h3v1h-3zM10 36h3v1h-3zM14 36h3v1h-3zM18 36h3v1h-3zM38 36h3v1h-3zM42 36h3v1h-3zM46 36h3v1h-3zM50 36h3v1h-3zM70 36h3v1h-3zM74 36h3v1h-3zM78 36h3v1h-3zM82 36h3v1h-3zM6 37h14v1h-14zM38 37h14v1h-14zM70 37h14v1h-14zM8 38h3v1h-3zM12 38h3v1h-3zM16 38h3v1h-3zM40 38h3v1h-3zM44 38h3v1h-3zM48 38h3v1h-3zM72 38h3v1h-3zM76 38h3v1h-3zM80 38h3v1h-3zM10 39h9v1h-9zM42 39h9v1h-9zM74 39h9v1h-9zM12 40h1v1h-1zM14 40h3v1h-3zM18 40h1v1h-1zM44 40h1v1h-1zM46 40h3v1h-3zM50 40h1v1h-1zM76 40h1v1h-1zM78 40h3v1h-3zM82 40h1v1h-1zM14 41h4v1h-4zM46 41h4v1h-4zM78 41h4v1h-4zM16 42h2v1h-2zM48 42h2v1h-2zM80 42h2v1h-2zM0 52h1v1h-1zM30 52h3v1h-3zM62 52h3v1h-3zM0 53h3v1h-3zM30 53h5v1h-5zM62 53h5v1h-5zM0 54h3v1h-3zM4 54h1v1h-1zM29 54h2v1h-2zM32 54h3v1h-3zM36 54h1v1h-1zM61 54h2v1h-2zM64 54h3v1h-3zM68 54h1v1h-1zM0 55h7v1h-7zM29 55h10v1h-10zM61 55h10v1h-10zM0 56h1v1h-1zM2 56h3v1h-3zM6 56h3v1h-3zM28 56h1v1h-1zM30 56h3v1h-3zM34 56h3v1h-3zM38 56h3v1h-3zM60 56h1v1h-1zM62 56h3v1h-3zM66 56h3v1h-3zM70 56h3v1h-3zM0 57h10v1h-10zM28 57h14v1h-14zM60 57h14v1h-14zM0 58h3v1h-3zM4 58h3v1h-3zM8 58h2v1h-2zM28 58h3v1h-3zM32 58h3v1h-3zM36 58h3v1h-3zM40 58h2v1h-2zM60 58h3v1h-3zM64 58h3v1h-3zM68 58h3v1h-3zM72 58h2v1h-2zM0 59h9v1h-9zM27 59h14v1h-14zM59 59h14v1h-14zM0 60h1v1h-1zM2 60h3v1h-3zM6 60h3v1h-3zM26 60h3v1h-3zM30 60h3v1h-3zM34 60h3v1h-3zM38 60h3v1h-3zM58 60h3v1h-3zM62 60h3v1h-3zM66 60h3v1h-3zM70 60h3v1h-3zM0 61h8v1h-8zM26 61h14v1h-14zM58 61h14v1h-14zM0 62h3v1h-3zM4 62h3v1h-3zM25 62h2v1h-2zM28 62h3v1h-3zM32 62h3v1h-3zM36 62h3v1h-3zM57 62h2v1h-2zM60 62h3v1h-3zM64 62h3v1h-3zM68 62h3v1h-3zM89 62h1v1h-1zM0 63h7v1h-7zM26 63h13v1h-13zM58 63h13v1h-13zM0 64h1v1h-1zM2 64h3v1h-3zM6 64h1v1h-1zM28 64h1v1h-1zM30 64h3v1h-3zM34 64h3v1h-3zM38 64h1v1h-1zM60 64h1v1h-1zM62 64h3v1h-3zM66 64h3v1h-3zM70 64h1v1h-1zM0 65h6v1h-6zM30 65h8v1h-8zM62 65h8v1h-8zM0 66h3v1h-3zM4 66h2v1h-2zM32 66h3v1h-3zM36 66h2v1h-2zM64 66h3v1h-3zM68 66h2v1h-2zM2 67h3v1h-3zM34 67h3v1h-3zM66 67h3v1h-3zM4 68h1v1h-1zM36 68h1v1h-1zM68 68h1v1h-1zM18 77h1v1h-1zM50 77h1v1h-1zM82 77h1v1h-1zM17 78h2v1h-2zM20 78h1v1h-1zM49 78h2v1h-2zM52 78h1v1h-1zM81 78h2v1h-2zM84 78h1v1h-1zM17 79h6v1h-6zM49 79h6v1h-6zM81 79h6v1h-6zM16 80h1v1h-1zM18 80h3v1h-3zM22 80h3v1h-3zM48 80h1v1h-1zM50 80h3v1h-3zM54 80h3v1h-3zM80 80h1v1h-1zM82 80h3v1h-3zM86 80h3v1h-3zM16 81h11v1h-11zM48 81h11v1h-11zM80 81h10v1h-10zM16 82h3v1h-3zM20 82h3v1h-3zM24 82h3v1h-3zM28 82h1v1h-1zM48 82h3v1h-3zM52 82h3v1h-3zM56 82h3v1h-3zM60 82h1v1h-1zM80 82h3v1h-3zM84 82h3v1h-3zM88 82h2v1h-2zM15 83h14v1h-14zM47 83h14v1h-14zM79 83h11v1h-11zM14 84h3v1h-3zM18 84h3v1h-3zM22 84h3v1h-3zM26 84h3v1h-3zM46 84h3v1h-3zM50 84h3v1h-3zM54 84h3v1h-3zM58 84h3v1h-3zM78 84h3v1h-3zM82 84h3v1h-3zM86 84h3v1h-3zM14 85h14v1h-14zM46 85h14v1h-14zM78 85h12v1h-12zM13 86h2v1h-2zM16 86h3v1h-3zM20 86h3v1h-3zM24 86h3v1h-3zM45 86h2v1h-2zM48 86h3v1h-3zM52 86h3v1h-3zM56 86h3v1h-3zM77 86h2v1h-2zM80 86h3v1h-3zM84 86h3v1h-3zM88 86h2v1h-2zM13 87h14v1h-14zM45 87h14v1h-14zM77 87h13v1h-13zM12 88h1v1h-1zM14 88h3v1h-3zM18 88h3v1h-3zM22 88h3v1h-3zM26 88h1v1h-1zM44 88h1v1h-1zM46 88h3v1h-3zM50 88h3v1h-3zM54 88h3v1h-3zM58 88h1v1h-1zM76 88h1v1h-1zM78 88h3v1h-3zM82 88h3v1h-3zM86 88h3v1h-3zM14 89h12v1h-12zM46 89h12v1h-12zM78 89h12v1h-12zM16 90h3v1h-3zM20 90h3v1h-3zM24 90h2v1h-2zM48 90h3v1h-3zM52 90h3v1h-3zM56 90h2v1h-2zM80 90h3v1h-3zM84 90h3v1h-3zM88 90h2v1h-2zM18 91h7v1h-7zM50 91h7v1h-7zM82 91h7v1h-7zM20 92h1v1h-1zM22 92h3v1h-3zM52 92h1v1h-1zM54 92h3v1h-3zM84 92h1v1h-1zM86 92h3v1h-3zM22 93h2v1h-2zM54 93h2v1h-2zM86 93h2v1h-2zM5 103h2v1h-2zM37 103h2v1h-2zM69 103h2v1h-2zM4 104h1v1h-1zM6 104h3v1h-3zM36 104h1v1h-1zM38 104h3v1h-3zM68 104h1v1h-1zM70 104h3v1h-3zM4 105h7v1h-7zM36 105h7v1h-7zM68 105h7v1h-7zM4 106h3v1h-3zM8 106h3v1h-3zM12 106h1v1h-1zM36 106h3v1h-3zM40 106h3v1h-3zM44 106h1v1h-1zM68 106h3v1h-3zM72 106h3v1h-3zM76 106h1v1h-1zM3 107h12v1h-12zM35 107h12v1h-12zM67 107h12v1h-12zM2 108h3v1h-3zM6 108h3v1h-3zM10 108h3v1h-3zM14 108h3v1h-3zM34 108h3v1h-3zM38 108h3v1h-3zM42 108h3v1h-3zM46 108h3v1h-3zM66 108h3v1h-3zM70 108h3v1h-3zM74 108h3v1h-3zM78 108h3v1h-3zM2 109h14v1h-14zM34 109h14v1h-14zM66 109h14v1h-14zM1 110h2v1h-2zM4 110h3v1h-3zM8 110h3v1h-3zM12 110h3v1h-3zM33 110h2v1h-2zM36 110h3v1h-3zM40 110h3v1h-3zM44 110h3v1h-3zM65 110h2v1h-2zM68 110h3v1h-3zM72 110h3v1h-3zM76 110h3v1h-3zM1 111h14v1h-14zM33 111h14v1h-14zM65 111h14v1h-14zM0 112h1v1h-1zM2 112h3v1h-3zM6 112h3v1h-3zM10 112h3v1h-3zM14 112h1v1h-1zM32 112h1v1h-1zM34 112h3v1h-3zM38 112h3v1h-3zM42 112h3v1h-3zM46 112h1v1h-1zM64 112h1v1h-1zM66 112h3v1h-3zM70 112h3v1h-3zM74 112h3v1h-3zM78 112h1v1h-1zM0 113h14v1h-14zM32 113h14v1h-14zM64 113h14v1h-14zM0 114h3v1h-3zM4 114h3v1h-3zM8 114h3v1h-3zM12 114h2v1h-2zM32 114h3v1h-3zM36 114h3v1h-3zM40 114h3v1h-3zM44 114h2v1h-2zM64 114h3v1h-3zM68 114h3v1h-3zM72 114h3v1h-3zM76 114h2v1h-2zM2 115h11v1h-11zM34 115h11v1h-11zM66 115h11v1h-11zM4 116h1v1h-1zM6 116h3v1h-3zM10 116h3v1h-3zM36 116h1v1h-1zM38 116h3v1h-3zM42 116h3v1h-3zM68 116h1v1h-1zM70 116h3v1h-3zM74 116h3v1h-3zM6 117h6v1h-6zM38 117h6v1h-6zM70 117h6v1h-6zM8 118h3v1h-3zM40 118h3v1h-3zM72 118h3v1h-3zM10 119h1v1h-1zM42 119h1v1h-1zM74 119h1v1h-1zM24 128h1v1h-1zM56 128h1v1h-1zM88 128h1v1h-1zM24 129h3v1h-3zM56 129h3v1h-3zM88 129h2v1h-2zM24 130h3v1h-3zM28 130h1v1h-1zM56 130h3v1h-3zM60 130h1v1h-1zM88 130h2v1h-2zM23 131h8v1h-8zM55 131h8v1h-8zM87 131h3v1h-3zM0 132h1v1h-1zM22 132h3v1h-3zM26 132h3v1h-3zM30 132h3v1h-3zM54 132h3v1h-3zM58 132h3v1h-3zM62 132h3v1h-3zM86 132h3v1h-3zM0 133h3v1h-3zM22 133h13v1h-13zM54 133h13v1h-13zM86 133h4v1h-4zM0 134h3v1h-3zM21 134h2v1h-2zM24 134h3v1h-3zM28 134h3v1h-3zM32 134h3v1h-3zM53 134h2v1h-2zM56 134h3v1h-3zM60 134h3v1h-3zM64 134h3v1h-3zM85 134h2v1h-2zM88 134h2v1h-2zM0 135h3v1h-3zM21 135h14v1h-14zM53 135h14v1h-14zM85 135h5v1h-5zM0 136h1v1h-1zM2 136h1v1h-1zM20 136h1v1h-1zM22 136h3v1h-3zM26 136h3v1h-3zM30 136h3v1h-3zM34 136h1v1h-1zM52 136h1v1h-1zM54 136h3v1h-3zM58 136h3v1h-3zM62 136h3v1h-3zM66 136h1v1h-1zM84 136h1v1h-1zM86 136h3v1h-3zM0 137h2v1h-2zM20 137h14v1h-14zM52 137h14v1h-14zM84 137h6v1h-6zM0 138h2v1h-2zM20 138h3v1h-3zM24 138h3v1h-3zM28 138h3v1h-3zM32 138h2v1h-2zM52 138h3v1h-3zM56 138h3v1h-3zM60 138h3v1h-3zM64 138h2v1h-2zM84 138h3v1h-3zM88 138h2v1h-2zM0 139h1v1h-1zM19 139h14v1h-14zM51 139h14v1h-14zM83 139h7v1h-7zM0 140h1v1h-1zM20 140h1v1h-1zM22 140h3v1h-3zM26 140h3v1h-3zM30 140h3v1h-3zM52 140h1v1h-1zM54 140h3v1h-3zM58 140h3v1h-3zM62 140h3v1h-3zM84 140h1v1h-1zM86 140h3v1h-3zM22 141h10v1h-10zM54 141h10v1h-10zM86 141h4v1h-4zM24 142h3v1h-3zM28 142h3v1h-3zM56 142h3v1h-3zM60 142h3v1h-3zM88 142h2v1h-2zM26 143h5v1h-5zM58 143h5v1h-5zM28 144h1v1h-1zM30 144h1v1h-1zM60 144h1v1h-1zM62 144h1v1h-1zM12 154h1v1h-1zM44 154h1v1h-1zM76 154h1v1h-1zM11 155h4v1h-4zM43 155h4v1h-4zM75 155h4v1h-4zM10 156h3v1h-3zM14 156h3v1h-3zM42 156h3v1h-3zM46 156h3v1h-3zM74 156h3v1h-3zM78 156h3v1h-3zM10 157h9v1h-9zM42 157h9v1h-9zM74 157h9v1h-9zM9 158h2v1h-2zM12 158h3v1h-3zM16 158h3v1h-3zM20 158h1v1h-1zM41 158h2v1h-2zM44 158h3v1h-3zM48 158h3v1h-3zM52 158h1v1h-1zM73 158h2v1h-2zM76 158h3v1h-3zM80 158h3v1h-3zM84 158h1v1h-1zM9 159h14v1h-14zM41 159h14v1h-14zM73 159h14v1h-14z"/><path fill="#4655b4" d="M8 0h1v1h-1zM10 0h3v1h-3zM14 0h3v1h-3zM18 0h3v1h-3zM22 0h1v1h-1zM40 0h1v1h-1zM42 0h3v1h-3zM46 0h3v1h-3zM50 0h3v1h-3zM54 0h1v1h-1zM72 0h1v1h-1zM74 0h3v1h-3zM78 0h3v1h-3zM82 0h3v1h-3zM86 0h1v1h-1zM8 1h14v1h-14zM40 1h14v1h-14zM72 1h14v1h-14zM8 2h3v1h-3zM12 2h3v1h-3zM16 2h3v1h-3zM20 2h2v1h-2zM40 2h3v1h-3zM44 2h3v1h-3zM48 2h3v1h-3zM52 2h2v1h-2zM72 2h3v1h-3zM76 2h3v1h-3zM80 2h3v1h-3zM84 2h2v1h-2zM7 3h14v1h-14zM39 3h14v1h-14zM71 3h14v1h-14zM6 4h3v1h-3zM10 4h3v1h-3zM14 4h3v1h-3zM18 4h3v1h-3zM38 4h3v1h-3zM42 4h3v1h-3zM46 4h3v1h-3zM50 4h3v1h-3zM70 4h3v1h-3zM74 4h3v1h-3zM78 4h3v1h-3zM82 4h3v1h-3zM6 5h14v1h-14zM38 5h14v1h-14zM70 5h14v1h-14zM8 6h3v1h-3zM12 6h3v1h-3zM16 6h3v1h-3zM40 6h3v1h-3zM44 6h3v1h-3zM48 6h3v1h-3zM72 6h3v1h-3zM76 6h3v1h-3zM80 6h3v1h-3zM10 7h9v1h-9zM42 7h9v1h-9zM74 7h9v1h-9zM5 8h1v1h-1zM12 8h1v1h-1zM14 8h3v1h-3zM18 8h1v1h-1zM37 8h1v1h-1zM44 8h1v1h-1zM46 8h3v1h-3zM50 8h1v1h-1zM69 8h1v1h-1zM76 8h1v1h-1zM78 8h3v1h-3zM82 8h1v1h-1zM14 9h4v1h-4zM46 9h4v1h-4zM78 9h4v1h-4zM3 10h1v1h-1zM7 10h1v1h-1zM11 10h1v1h-1zM16 10h2v1h-2zM35 10h1v1h-1zM39 10h1v1h-1zM43 10h1v1h-1zM48 10h2v1h-2zM67 10h1v1h-1zM71 10h1v1h-1zM75 10h1v1h-1zM80 10h2v1h-2zM5 12h1v1h-1zM9 12h1v1h-1zM13 12h1v1h-1zM37 12h1v1h-1zM41 12h1v1h-1zM45 12h1v1h-1zM69 12h1v1h-1zM73 12h1v1h-1zM77 12h1v1h-1zM3 14h1v1h-1zM7 14h1v1h-1zM11 14h1v1h-1zM15 14h1v1h-1zM35 14h1v1h-1zM39 14h1v1h-1zM43 14h1v1h-1zM47 14h1v1h-1zM67 14h1v1h-1zM71 14h1v1h-1zM75 14h1v1h-1zM79 14h1v1h-1zM1 16h1v1h-1zM5 16h1v1h-1zM9 16h1v1h-1zM13 16h1v1h-1zM33 16h1v1h-1zM37 16h1v1h-1zM41 16h1v1h-1zM45 16h1v1h-1zM65 16h1v1h-1zM69 16h1v1h-1zM73 16h1v1h-1zM77 16h1v1h-1zM3 18h1v1h-1zM7 18h1v1h-1zM11 18h1v1h-1zM35 18h1v1h-1zM39 18h1v1h-1zM43 18h1v1h-1zM67 18h1v1h-1zM71 18h1v1h-1zM75 18h1v1h-1zM0 20h1v1h-1zM5 20h1v1h-1zM9 20h1v1h-1zM30 20h3v1h-3zM37 20h1v1h-1zM41 20h1v1h-1zM62 20h3v1h-3zM69 20h1v1h-1zM73 20h1v1h-1zM0 21h3v1h-3zM30 21h5v1h-5zM62 21h5v1h-5zM0 22h3v1h-3zM4 22h1v1h-1zM11 22h1v1h-1zM29 22h2v1h-2zM32 22h3v1h-3zM36 22h1v1h-1zM43 22h1v1h-1zM61 22h2v1h-2zM64 22h3v1h-3zM68 22h1v1h-1zM75 22h1v1h-1zM0 23h7v1h-7zM29 23h10v1h-10zM61 23h10v1h-10zM0 24h1v1h-1zM2 24h3v1h-3zM6 24h3v1h-3zM28 24h1v1h-1zM30 24h3v1h-3zM34 24h3v1h-3zM38 24h3v1h-3zM60 24h1v1h-1zM62 24h3v1h-3zM66 24h3v1h-3zM70 24h3v1h-3zM0 25h10v1h-10zM28 25h14v1h-14zM60 25h14v1h-14zM0 26h3v1h-3zM4 26h3v1h-3zM8 26h2v1h-2zM28 26h3v1h-3zM32 26h3v1h-3zM36 26h3v1h-3zM40 26h2v1h-2zM60 26h3v1h-3zM64 26h3v1h-3zM68 26h3v1h-3zM72 26h2v1h-2zM0 27h9v1h-9zM27 27h14v1h-14zM59 27h14v1h-14zM0 28h1v1h-1zM2 28h3v1h-3zM6 28h3v1h-3zM26 28h3v1h-3zM30 28h3v1h-3zM34 28h3v1h-3zM38 28h3v1h-3zM58 28h3v1h-3zM62 28h3v1h-3zM66 28h3v1h-3zM70 28h3v1h-3zM0 29h8v1h-8zM26 29h14v1h-14zM58 29h14v1h-14zM0 30h3v1h-3zM4 30h3v1h-3zM25 30h2v1h-2zM28 30h3v1h-3zM32 30h3v1h-3zM36 30h3v1h-3zM57 30h2v1h-2zM60 30h3v1h-3zM64 30h3v1h-3zM68 30h3v1h-3zM89 30h1v1h-1zM0 31h7v1h-7zM26 31h13v1h-13zM58 31h13v1h-13zM0 32h1v1h-1zM2 32h3v1h-3zM6 32h1v1h-1zM28 32h1v1h-1zM30 32h3v1h-3zM34 32h3v1h-3zM38 32h1v1h-1zM60 32h1v1h-1zM62 32h3v1h-3zM66 32h3v1h-3zM70 32h1v1h-1zM0 33h6v1h-6zM30 33h8v1h-8zM62 33h8v1h-8zM0 34h3v1h-3zM4 34h2v1h-2zM23 34h1v1h-1zM27 34h1v1h-1zM32 34h3v1h-3zM36 34h2v1h-2zM55 34h1v1h-1zM59 34h1v1h-1zM64 34h3v1h-3zM68 34h2v1h-2zM87 34h1v1h-1zM2 35h3v1h-3zM34 35h3v1h-3zM66 35h3v1h-3zM4 36h1v1h-1zM25 36h1v1h-1zM29 36h1v1h-1zM36 36h1v1h-1zM57 36h1v1h-1zM61 36h1v1h-1zM68 36h1v1h-1zM89 36h1v1h-1zM3 38h1v1h-1zM23 38h1v1h-1zM27 38h1v1h-1zM31 38h1v1h-1zM35 38h1v1h-1zM55 38h1v1h-1zM59 38h1v1h-1zM63 38h1v1h-1zM67 38h1v1h-1zM87 38h1v1h-1zM1 40h1v1h-1zM21 40h1v1h-1zM25 40h1v1h-1zM29 40h1v1h-1zM33 40h1v1h-1zM53 40h1v1h-1zM57 40h1v1h-1zM61 40h1v1h-1zM65 40h1v1h-1zM85 40h1v1h-1zM89 40h1v1h-1zM19 42h1v1h-1zM23 42h1v1h-1zM27 42h1v1h-1zM31 42h1v1h-1zM51 42h1v1h-1zM55 42h1v1h-1zM59 42h1v1h-1zM63 42h1v1h-1zM83 42h1v1h-1zM87 42h1v1h-1zM21 44h1v1h-1zM25 44h1v1h-1zM29 44h1v1h-1zM53 44h1v1h-1zM57 44h1v1h-1zM61 44h1v1h-1zM85 44h1v1h-1zM89 44h1v1h-1zM18 45h1v1h-1zM50 45h1v1h-1zM82 45h1v1h-1zM17 46h2v1h-2zM20 46h1v1h-1zM27 46h1v1h-1zM31 46h1v1h-1zM49 46h2v1h-2zM52 46h1v1h-1zM59 46h1v1h-1zM63 46h1v1h-1zM81 46h2v1h-2zM84 46h1v1h-1zM17 47h6v1h-6zM49 47h6v1h-6zM81 47h6v1h-6zM16 48h1v1h-1zM18 48h3v1h-3zM22 48h3v1h-3zM29 48h1v1h-1zM48 48h1v1h-1zM50 48h3v1h-3zM54 48h3v1h-3zM61 48h1v1h-1zM80 48h1v1h-1zM82 48h3v1h-3zM86 48h3v1h-3zM16 49h11v1h-11zM48 49h11v1h-11zM80 49h10v1h-10zM16 50h3v1h-3zM20 50h3v1h-3zM24 50h3v1h-3zM28 50h1v1h-1zM48 50h3v1h-3zM52 50h3v1h-3zM56 50h3v1h-3zM60 50h1v1h-1zM80 50h3v1h-3zM84 50h3v1h-3zM88 50h2v1h-2zM15 51h14v1h-14zM47 51h14v1h-14zM79 51h11v1h-11zM14 52h3v1h-3zM18 52h3v1h-3zM22 52h3v1h-3zM26 52h3v1h-3zM46 52h3v1h-3zM50 52h3v1h-3zM54 52h3v1h-3zM58 52h3v1h-3zM78 52h3v1h-3zM82 52h3v1h-3zM86 52h3v1h-3zM14 53h14v1h-14zM46 53h14v1h-14zM78 53h12v1h-12zM13 54h2v1h-2zM16 54h3v1h-3zM20 54h3v1h-3zM24 54h3v1h-3zM45 54h2v1h-2zM48 54h3v1h-3zM52 54h3v1h-3zM56 54h3v1h-3zM77 54h2v1h-2zM80 54h3v1h-3zM84 54h3v1h-3zM88 54h2v1h-2zM13 55h14v1h-14zM45 55h14v1h-14zM77 55h13v1h-13zM12 56h1v1h-1zM14 56h3v1h-3zM18 56h3v1h-3zM22 56h3v1h-3zM26 56h1v1h-1zM44 56h1v1h-1zM46 56h3v1h-3zM50 56h3v1h-3zM54 56h3v1h-3zM58 56h1v1h-1zM76 56h1v1h-1zM78 56h3v1h-3zM82 56h3v1h-3zM86 56h3v1h-3zM14 57h12v1h-12zM46 57h12v1h-12zM78 57h12v1h-12zM11 58h1v1h-1zM16 58h3v1h-3zM20 58h3v1h-3zM24 58h2v1h-2zM43 58h1v1h-1zM48 58h3v1h-3zM52 58h3v1h-3zM56 58h2v1h-2zM75 58h1v1h-1zM80 58h3v1h-3zM84 58h3v1h-3zM88 58h2v1h-2zM18 59h7v1h-7zM50 59h7v1h-7zM82 59h7v1h-7zM13 60h1v1h-1zM20 60h1v1h-1zM22 60h3v1h-3zM45 60h1v1h-1zM52 60h1v1h-1zM54 60h3v1h-3zM77 60h1v1h-1zM84 60h1v1h-1zM86 60h3v1h-3zM22 61h2v1h-2zM54 61h2v1h-2zM86 61h2v1h-2zM11 62h1v1h-1zM15 62h1v1h-1zM19 62h1v1h-1zM43 62h1v1h-1zM47 62h1v1h-1zM51 62h1v1h-1zM75 62h1v1h-1zM79 62h1v1h-1zM83 62h1v1h-1zM9 64h1v1h-1zM13 64h1v1h-1zM17 64h1v1h-1zM21 64h1v1h-1zM41 64h1v1h-1zM45 64h1v1h-1zM49 64h1v1h-1zM53 64h1v1h-1zM73 64h1v1h-1zM77 64h1v1h-1zM81 64h1v1h-1zM85 64h1v1h-1zM7 66h1v1h-1zM11 66h1v1h-1zM15 66h1v1h-1zM19 66h1v1h-1zM39 66h1v1h-1zM43 66h1v1h-1zM47 66h1v1h-1zM51 66h1v1h-1zM71 66h1v1h-1zM75 66h1v1h-1zM79 66h1v1h-1zM83 66h1v1h-1zM9 68h1v1h-1zM13 68h1v1h-1zM17 68h1v1h-1zM41 68h1v1h-1zM45 68h1v1h-1zM49 68h1v1h-1zM73 68h1v1h-1zM77 68h1v1h-1zM81 68h1v1h-1zM11 70h1v1h-1zM15 70h1v1h-1zM19 70h1v1h-1zM43 70h1v1h-1zM47 70h1v1h-1zM51 70h1v1h-1zM75 70h1v1h-1zM79 70h1v1h-1zM83 70h1v1h-1zM5 71h2v1h-2zM37 71h2v1h-2zM69 71h2v1h-2zM4 72h1v1h-1zM6 72h3v1h-3zM13 72h1v1h-1zM17 72h1v1h-1zM36 72h1v1h-1zM38 72h3v1h-3zM45 72h1v1h-1zM49 72h1v1h-1zM68 72h1v1h-1zM70 72h3v1h-3zM77 72h1v1h-1zM81 72h1v1h-1zM4 73h7v1h-7zM36 73h7v1h-7zM68 73h7v1h-7zM4 74h3v1h-3zM8 74h3v1h-3zM12 74h1v1h-1zM36 74h3v1h-3zM40 74h3v1h-3zM44 74h1v1h-1zM68 74h3v1h-3zM72 74h3v1h-3zM76 74h1v1h-1zM3 75h12v1h-12zM35 75h12v1h-12zM67 75h12v1h-12zM2 76h3v1h-3zM6 76h3v1h-3zM10 76h3v1h-3zM14 76h3v1h-3zM34 76h3v1h-3zM38 76h3v1h-3zM42 76h3v1h-3zM46 76h3v1h-3zM66 76h3v1h-3zM70 76h3v1h-3zM74 76h3v1h-3zM78 76h3v1h-3zM2 77h14v1h-14zM34 77h14v1h-14zM66 77h14v1h-14zM1 78h2v1h-2zM4 78h3v1h-3zM8 78h3v1h-3zM12 78h3v1h-3zM33 78h2v1h-2zM36 78h3v1h-3zM40 78h3v1h-3zM44 78h3v1h-3zM65 78h2v1h-2zM68 78h3v1h-3zM72 78h3v1h-3zM76 78h3v1h-3zM1 79h14v1h-14zM33 79h14v1h-14zM65 79h14v1h-14zM0 80h1v1h-1zM2 80h3v1h-3zM6 80h3v1h-3zM10 80h3v1h-3zM14 80h1v1h-1zM32 80h1v1h-1zM34 80h3v1h-3zM38 80h3v1h-3zM42 80h3v1h-3zM46 80h1v1h-1zM64 80h1v1h-1zM66 80h3v1h-3zM70 80h3v1h-3zM74 80h3v1h-3zM78 80h1v1h-1zM0 81h14v1h-14zM32 81h14v1h-14zM64 81h14v1h-14zM0 82h3v1h-3zM4 82h3v1h-3zM8 82h3v1h-3zM12 82h2v1h-2zM32 82h3v1h-3zM36 82h3v1h-3zM40 82h3v1h-3zM44 82h2v1h-2zM64 82h3v1h-3zM68 82h3v1h-3zM72 82h3v1h-3zM76 82h2v1h-2zM2 83h11v1h-11zM34 83h11v1h-11zM66 83h11v1h-11zM4 84h1v1h-1zM6 84h3v1h-3zM10 84h3v1h-3zM36 84h1v1h-1zM38 84h3v1h-3zM42 84h3v1h-3zM68 84h1v1h-1zM70 84h3v1h-3zM74 84h3v1h-3zM6 85h6v1h-6zM38 85h6v1h-6zM70 85h6v1h-6zM3 86h1v1h-1zM8 86h3v1h-3zM31 86h1v1h-1zM35 86h1v1h-1zM40 86h3v1h-3zM63 86h1v1h-1zM67 86h1v1h-1zM72 86h3v1h-3zM10 87h1v1h-1zM42 87h1v1h-1zM74 87h1v1h-1zM1 88h1v1h-1zM5 88h1v1h-1zM29 88h1v1h-1zM33 88h1v1h-1zM37 88h1v1h-1zM61 88h1v1h-1zM65 88h1v1h-1zM69 88h1v1h-1zM3 90h1v1h-1zM7 90h1v1h-1zM27 90h1v1h-1zM31 90h1v1h-1zM35 90h1v1h-1zM39 90h1v1h-1zM59 90h1v1h-1zM63 90h1v1h-1zM67 90h1v1h-1zM71 90h1v1h-1zM1 92h1v1h-1zM5 92h1v1h-1zM29 92h1v1h-1zM33 92h1v1h-1zM37 92h1v1h-1zM61 92h1v1h-1zM65 92h1v1h-1zM69 92h1v1h-1zM3 94h1v1h-1zM7 94h1v1h-1zM27 94h1v1h-1zM31 94h1v1h-1zM35 94h1v1h-1zM39 94h1v1h-1zM59 94h1v1h-1zM63 94h1v1h-1zM67 94h1v1h-1zM71 94h1v1h-1zM1 96h1v1h-1zM5 96h1v1h-1zM24 96h1v1h-1zM29 96h1v1h-1zM33 96h1v1h-1zM37 96h1v1h-1zM56 96h1v1h-1zM61 96h1v1h-1zM65 96h1v1h-1zM69 96h1v1h-1zM88 96h1v1h-1zM24 97h3v1h-3zM56 97h3v1h-3zM88 97h2v1h-2zM3 98h1v1h-1zM24 98h3v1h-3zM28 98h1v1h-1zM35 98h1v1h-1zM56 98h3v1h-3zM60 98h1v1h-1zM67 98h1v1h-1zM88 98h2v1h-2zM23 99h8v1h-8zM55 99h8v1h-8zM87 99h3v1h-3zM0 100h1v1h-1zM22 100h3v1h-3zM26 100h3v1h-3zM30 100h3v1h-3zM54 100h3v1h-3zM58 100h3v1h-3zM62 100h3v1h-3zM86 100h3v1h-3zM0 101h3v1h-3zM22 101h13v1h-13zM54 101h13v1h-13zM86 101h4v1h-4zM0 102h3v1h-3zM21 102h2v1h-2zM24 102h3v1h-3zM28 102h3v1h-3zM32 102h3v1h-3zM53 102h2v1h-2zM56 102h3v1h-3zM60 102h3v1h-3zM64 102h3v1h-3zM85 102h2v1h-2zM88 102h2v1h-2zM0 103h3v1h-3zM21 103h14v1h-14zM53 103h14v1h-14zM85 103h5v1h-5zM0 104h1v1h-1zM2 104h1v1h-1zM20 104h1v1h-1zM22 104h3v1h-3zM26 104h3v1h-3zM30 104h3v1h-3zM34 104h1v1h-1zM52 104h1v1h-1zM54 104h3v1h-3zM58 104h3v1h-3zM62 104h3v1h-3zM66 104h1v1h-1zM84 104h1v1h-1zM86 104h3v1h-3zM0 105h2v1h-2zM20 105h14v1h-14zM52 105h14v1h-14zM84 105h6v1h-6zM0 106h2v1h-2zM20 106h3v1h-3zM24 106h3v1h-3zM28 106h3v1h-3zM32 106h2v1h-2zM52 106h3v1h-3zM56 106h3v1h-3zM60 106h3v1h-3zM64 106h2v1h-2zM84 106h3v1h-3zM88 106h2v1h-2zM0 107h1v1h-1zM19 107h14v1h-14zM51 107h14v1h-14zM83 107h7v1h-7zM0 108h1v1h-1zM20 108h1v1h-1zM22 108h3v1h-3zM26 108h3v1h-3zM30 108h3v1h-3zM52 108h1v1h-1zM54 108h3v1h-3zM58 108h3v1h-3zM62 108h3v1h-3zM84 108h1v1h-1zM86 108h3v1h-3zM22 109h10v1h-10zM54 109h10v1h-10zM86 109h4v1h-4zM19 110h1v1h-1zM24 110h3v1h-3zM28 110h3v1h-3zM51 110h1v1h-1zM56 110h3v1h-3zM60 110h3v1h-3zM83 110h1v1h-1zM88 110h2v1h-2zM26 111h5v1h-5zM58 111h5v1h-5zM17 112h1v1h-1zM21 112h1v1h-1zM28 112h1v1h-1zM30 112h1v1h-1zM49 112h1v1h-1zM53 112h1v1h-1zM60 112h1v1h-1zM62 112h1v1h-1zM81 112h1v1h-1zM85 112h1v1h-1zM15 114h1v1h-1zM19 114h1v1h-1zM23 114h1v1h-1zM27 114h1v1h-1zM47 114h1v1h-1zM51 114h1v1h-1zM55 114h1v1h-1zM59 114h1v1h-1zM79 114h1v1h-1zM83 114h1v1h-1zM87 114h1v1h-1zM17 116h1v1h-1zM21 116h1v1h-1zM25 116h1v1h-1zM49 116h1v1h-1zM53 116h1v1h-1zM57 116h1v1h-1zM81 116h1v1h-1zM85 116h1v1h-1zM89 116h1v1h-1zM15 118h1v1h-1zM19 118h1v1h-1zM23 118h1v1h-1zM27 118h1v1h-1zM47 118h1v1h-1zM51 118h1v1h-1zM55 118h1v1h-1zM59 118h1v1h-1zM79 118h1v1h-1zM83 118h1v1h-1zM87 118h1v1h-1zM13 120h1v1h-1zM17 120h1v1h-1zM21 120h1v1h-1zM25 120h1v1h-1zM45 120h1v1h-1zM49 120h1v1h-1zM53 120h1v1h-1zM57 120h1v1h-1zM77 120h1v1h-1zM81 120h1v1h-1zM85 120h1v1h-1zM89 120h1v1h-1zM12 122h1v1h-1zM19 122h1v1h-1zM23 122h1v1h-1zM44 122h1v1h-1zM51 122h1v1h-1zM55 122h1v1h-1zM76 122h1v1h-1zM83 122h1v1h-1zM87 122h1v1h-1zM11 123h4v1h-4zM43 123h4v1h-4zM75 123h4v1h-4zM10 124h3v1h-3zM14 124h3v1h-3zM21 124h1v1h-1zM42 124h3v1h-3zM46 124h3v1h-3zM53 124h1v1h-1zM74 124h3v1h-3zM78 124h3v1h-3zM85 124h1v1h-1zM10 125h9v1h-9zM42 125h9v1h-9zM74 125h9v1h-9zM9 126h2v1h-2zM12 126h3v1h-3zM16 126h3v1h-3zM20 126h1v1h-1zM41 126h2v1h-2zM44 126h3v1h-3zM48 126h3v1h-3zM52 126h1v1h-1zM73 126h2v1h-2zM76 126h3v1h-3zM80 126h3v1h-3zM84 126h1v1h-1zM9 127h14v1h-14zM41 127h14v1h-14zM73 127h14v1h-14zM8 128h1v1h-1zM10 128h3v1h-3zM14 128h3v1h-3zM18 128h3v1h-3zM22 128h1v1h-1zM40 128h1v1h-1zM42 128h3v1h-3zM46 128h3v1h-3zM50 128h3v1h-3zM54 128h1v1h-1zM72 128h1v1h-1zM74 128h3v1h-3zM78 128h3v1h-3zM82 128h3v1h-3zM86 128h1v1h-1zM8 129h14v1h-14zM40 129h14v1h-14zM72 129h14v1h-14zM8 130h3v1h-3zM12 130h3v1h-3zM16 130h3v1h-3zM20 130h2v1h-2zM40 130h3v1h-3zM44 130h3v1h-3zM48 130h3v1h-3zM52 130h2v1h-2zM72 130h3v1h-3zM76 130h3v1h-3zM80 130h3v1h-3zM84 130h2v1h-2zM7 131h14v1h-14zM39 131h14v1h-14zM71 131h14v1h-14zM6 132h3v1h-3zM10 132h3v1h-3zM14 132h3v1h-3zM18 132h3v1h-3zM38 132h3v1h-3zM42 132h3v1h-3zM46 132h3v1h-3zM50 132h3v1h-3zM70 132h3v1h-3zM74 132h3v1h-3zM78 132h3v1h-3zM82 132h3v1h-3zM6 133h14v1h-14zM38 133h14v1h-14zM70 133h14v1h-14zM8 134h3v1h-3zM12 134h3v1h-3zM16 134h3v1h-3zM40 134h3v1h-3zM44 134h3v1h-3zM48 134h3v1h-3zM72 134h3v1h-3zM76 134h3v1h-3zM80 134h3v1h-3zM10 135h9v1h-9zM42 135h9v1h-9zM74 135h9v1h-9zM5 136h1v1h-1zM12 136h1v1h-1zM14 136h3v1h-3zM18 136h1v1h-1zM37 136h1v1h-1zM44 136h1v1h-1zM46 136h3v1h-3zM50 136h1v1h-1zM69 136h1v1h-1zM76 136h1v1h-1zM78 136h3v1h-3zM82 136h1v1h-1zM14 137h4v1h-4zM46 137h4v1h-4zM78 137h4v1h-4zM3 138h1v1h-1zM7 138h1v1h-1zM11 138h1v1h-1zM16 138h2v1h-2zM35 138h1v1h-1zM39 138h1v1h-1zM43 138h1v1h-1zM48 138h2v1h-2zM67 138h1v1h-1zM71 138h1v1h-1zM75 138h1v1h-1zM80 138h2v1h-2zM5 140h1v1h-1zM9 140h1v1h-1zM13 140h1v1h-1zM37 140h1v1h-1zM41 140h1v1h-1zM45 140h1v1h-1zM69 140h1v1h-1zM73 140h1v1h-1zM77 140h1v1h-1zM3 142h1v1h-1zM7 142h1v1h-1zM11 142h1v1h-1zM15 142h1v1h-1zM35 142h1v1h-1zM39 142h1v1h-1zM43 142h1v1h-1zM47 142h1v1h-1zM67 142h1v1h-1zM71 142h1v1h-1zM75 142h1v1h-1zM79 142h1v1h-1zM1 144h1v1h-1zM5 144h1v1h-1zM9 144h1v1h-1zM13 144h1v1h-1zM33 144h1v1h-1zM37 144h1v1h-1zM41 144h1v1h-1zM45 144h1v1h-1zM65 144h1v1h-1zM69 144h1v1h-1zM73 144h1v1h-1zM77 144h1v1h-1zM3 146h1v1h-1zM7 146h1v1h-1zM11 146h1v1h-1zM35 146h1v1h-1zM39 146h1v1h-1zM43 146h1v1h-1zM67 146h1v1h-1zM71 146h1v1h-1zM75 146h1v1h-1zM0 148h1v1h-1zM5 148h1v1h-1zM9 148h1v1h-1zM30 148h3v1h-3zM37 148h1v1h-1zM41 148h1v1h-1zM62 148h3v1h-3zM69 148h1v1h-1zM73 148h1v1h-1zM0 149h3v1h-3zM30 149h5v1h-5zM62 149h5v1h-5zM0 150h3v1h-3zM4 150h1v1h-1zM11 150h1v1h-1zM29 150h2v1h-2zM32 150h3v1h-3zM36 150h1v1h-1zM43 150h1v1h-1zM61 150h2v1h-2zM64 150h3v1h-3zM68 150h1v1h-1zM75 150h1v1h-1zM0 151h7v1h-7zM29 151h10v1h-10zM61 151h10v1h-10zM0 152h1v1h-1zM2 152h3v1h-3zM6 152h3v1h-3zM28 152h1v1h-1zM30 152h3v1h-3zM34 152h3v1h-3zM38 152h3v1h-3zM60 152h1v1h-1zM62 152h3v1h-3zM66 152h3v1h-3zM70 152h3v1h-3zM0 153h10v1h-10zM28 153h14v1h-14zM60 153h14v1h-14zM0 154h3v1h-3zM4 154h3v1h-3zM8 154h2v1h-2zM28 154h3v1h-3zM32 154h3v1h-3zM36 154h3v1h-3zM40 154h2v1h-2zM60 154h3v1h-3zM64 154h3v1h-3zM68 154h3v1h-3zM72 154h2v1h-2zM0 155h9v1h-9zM27 155h14v1h-14zM59 155h14v1h-14zM0 156h1v1h-1zM2 156h3v1h-3zM6 156h3v1h-3zM26 156h3v1h-3zM30 156h3v1h-3zM34 156h3v1h-3zM38 156h3v1h-3zM58 156h3v1h-3zM62 156h3v1h-3zM66 156h3v1h-3zM70 156h3v1h-3zM0 157h8v1h-8zM26 157h14v1h-14zM58 157h14v1h-14zM0 158h3v1h-3zM4 158h3v1h-3zM25 158h2v1h-2zM28 158h3v1h-3zM32 158h3v1h-3zM36 158h3v1h-3zM57 158h2v1h-2zM60 158h3v1h-3zM64 158h3v1h-3zM68 158h3v1h-3zM89 158h1v1h-1zM0 159h7v1h-7zM26 159h13v1h-13zM58 159h13v1h-13z"/><path fill="#ec3360" d="M0 0h1v1h-1zM2 0h3v1h-3zM6 0h1v1h-1zM28 0h1v1h-1zM30 0h3v1h-3zM34 0h3v1h-3zM38 0h1v1h-1zM60 0h1v1h-1zM62 0h3v1h-3zM66 0h3v1h-3zM70 0h1v1h-1zM0 1h6v1h-6zM30 1h8v1h-8zM62 1h8v1h-8zM0 2h3v1h-3zM4 2h2v1h-2zM32 2h3v1h-3zM36 2h2v1h-2zM64 2h3v1h-3zM68 2h2v1h-2zM2 3h3v1h-3zM34 3h3v1h-3zM66 3h3v1h-3zM4 4h1v1h-1zM36 4h1v1h-1zM68 4h1v1h-1zM18 13h1v1h-1zM50 13h1v1h-1zM82 13h1v1h-1zM17 14h2v1h-2zM20 14h1v1h-1zM49 14h2v1h-2zM52 14h1v1h-1zM81 14h2v1h-2zM84 14h1v1h-1zM17 15h6v1h-6zM49 15h6v1h-6zM81 15h6v1h-6zM16 16h1v1h-1zM18 16h3v1h-3zM22 16h3v1h-3zM48 16h1v1h-1zM50 16h3v1h-3zM54 16h3v1h-3zM80 16h1v1h-1zM82 16h3v1h-3zM86 16h3v1h-3zM16 17h11v1h-11zM48 17h11v1h-11zM80 17h10v1h-10zM16 18h3v1h-3zM20 18h3v1h-3zM24 18h3v1h-3zM28 18h1v1h-1zM48 18h3v1h-3zM52 18h3v1h-3zM56 18h3v1h-3zM60 18h1v1h-1zM80 18h3v1h-3zM84 18h3v1h-3zM88 18h2v1h-2zM15 19h14v1h-14zM47 19h14v1h-14zM79 19h11v1h-11zM14 20h3v1h-3zM18 20h3v1h-3zM22 20h3v1h-3zM26 20h3v1h-3zM46 20h3v1h-3zM50 20h3v1h-3zM54 20h3v1h-3zM58 20h3v1h-3zM78 20h3v1h-3zM82 20h3v1h-3zM86 20h3v1h-3zM14 21h14v1h-14zM46 21h14v1h-14zM78 21h12v1h-12zM13 22h2v1h-2zM16 22h3v1h-3zM20 22h3v1h-3zM24 22h3v1h-3zM45 22h2v1h-2zM48 22h3v1h-3zM52 22h3v1h-3zM56 22h3v1h-3zM77 22h2v1h-2zM80 22h3v1h-3zM84 22h3v1h-3zM88 22h2v1h-2zM13 23h14v1h-14zM45 23h14v1h-14zM77 23h13v1h-13zM12 24h1v1h-1zM14 24h3v1h-3zM18 24h3v1h-3zM22 24h3v1h-3zM26 24h1v1h-1zM44 24h1v1h-1zM46 24h3v1h-3zM50 24h3v1h-3zM54 24h3v1h-3zM58 24h1v1h-1zM76 24h1v1h-1zM78 24h3v1h-3zM82 24h3v1h-3zM86 24h3v1h-3zM14 25h12v1h-12zM46 25h12v1h-12zM78 25h12v1h-12zM16 26h3v1h-3zM20 26h3v1h-3zM24 26h2v1h-2zM48 26h3v1h-3zM52 26h3v1h-3zM56 26h2v1h-2zM80 26h3v1h-3zM84 26h3v1h-3zM88 26h2v1h-2zM18 27h7v1h-7zM50 27h7v1h-7zM82 27h7v1h-7zM20 28h1v1h-1zM22 28h3v1h-3zM52 28h1v1h-1zM54 28h3v1h-3zM84 28h1v1h-1zM86 28h3v1h-3zM22 29h2v1h-2zM54 29h2v1h-2zM86 29h2v1h-2zM5 39h2v1h-2zM37 39h2v1h-2zM69 39h2v1h-2zM4 40h1v1h-1zM6 40h3v1h-3zM36 40h1v1h-1zM38 40h3v1h-3zM68 40h1v1h-1zM70 40h3v1h-3zM4 41h7v1h-7zM36 41h7v1h-7zM68 41h7v1h-7zM4 42h3v1h-3zM8 42h3v1h-3zM12 42h1v1h-1zM36 42h3v1h-3zM40 42h3v1h-3zM44 42h1v1h-1zM68 42h3v1h-3zM72 42h3v1h-3zM76 42h1v1h-1zM3 43h12v1h-12zM35 43h12v1h-12zM67 43h12v1h-12zM2 44h3v1h-3zM6 44h3v1h-3zM10 44h3v1h-3zM14 44h3v1h-3zM34 44h3v1h-3zM38 44h3v1h-3zM42 44h3v1h-3zM46 44h3v1h-3zM66 44h3v1h-3zM70 44h3v1h-3zM74 44h3v1h-3zM78 44h3v1h-3zM2 45h14v1h-14zM34 45h14v1h-14zM66 45h14v1h-14zM1 46h2v1h-2zM4 46h3v1h-3zM8 46h3v1h-3zM12 46h3v1h-3zM33 46h2v1h-2zM36 46h3v1h-3zM40 46h3v1h-3zM44 46h3v1h-3zM65 46h2v1h-2zM68 46h3v1h-3zM72 46h3v1h-3zM76 46h3v1h-3zM1 47h14v1h-14zM33 47h14v1h-14zM65 47h14v1h-14zM0 48h1v1h-1zM2 48h3v1h-3zM6 48h3v1h-3zM10 48h3v1h-3zM14 48h1v1h-1zM32 48h1v1h-1zM34 48h3v1h-3zM38 48h3v1h-3zM42 48h3v1h-3zM46 48h1v1h-1zM64 48h1v1h-1zM66 48h3v1h-3zM70 48h3v1h-3zM74 48h3v1h-3zM78 48h1v1h-1zM0 49h14v1h-14zM32 49h14v1h-14zM64 49h14v1h-14zM0 50h3v1h-3zM4 50h3v1h-3zM8 50h3v1h-3zM12 50h2v1h-2zM32 50h3v1h-3zM36 50h3v1h-3zM40 50h3v1h-3zM44 50h2v1h-2zM64 50h3v1h-3zM68 50h3v1h-3zM72 50h3v1h-3zM76 50h2v1h-2zM2 51h11v1h-11zM34 51h11v1h-11zM66 51h11v1h-11zM4 52h1v1h-1zM6 52h3v1h-3zM10 52h3v1h-3zM36 52h1v1h-1zM38 52h3v1h-3zM42 52h3v1h-3zM68 52h1v1h-1zM70 52h3v1h-3zM74 52h3v1h-3zM6 53h6v1h-6zM38 53h6v1h-6zM70 53h6v1h-6zM8 54h3v1h-3zM40 54h3v1h-3zM72 54h3v1h-3zM10 55h1v1h-1zM42 55h1v1h-1zM74 55h1v1h-1zM24 64h1v1h-1zM56 64h1v1h-1zM88 64h1v1h-1zM24 65h3v1h-3zM56 65h3v1h-3zM88 65h2v1h-2zM24 66h3v1h-3zM28 66h1v1h-1zM56 66h3v1h-3zM60 66h1v1h-1zM88 66h2v1h-2zM23 67h8v1h-8zM55 67h8v1h-8zM87 67h3v1h-3zM0 68h1v1h-1zM22 68h3v1h-3zM26 68h3v1h-3zM30 68h3v1h-3zM54 68h3v1h-3zM58 68h3v1h-3zM62 68h3v1h-3zM86 68h3v1h-3zM0 69h3v1h-3zM22 69h13v1h-13zM54 69h13v1h-13zM86 69h4v1h-4zM0 70h3v1h-3zM21 70h2v1h-2zM24 70h3v1h-3zM28 70h3v1h-3zM32 70h3v1h-3zM53 70h2v1h-2zM56 70h3v1h-3zM60 70h3v1h-3zM64 70h3v1h-3zM85 70h2v1h-2zM88 70h2v1h-2zM0 71h3v1h-3zM21 71h14v1h-14zM53 71h14v1h-14zM85 71h5v1h-5zM0 72h1v1h-1zM2 72h1v1h-1zM20 72h1v1h-1zM22 72h3v1h-3zM26 72h3v1h-3zM30 72h3v1h-3zM34 72h1v1h-1zM52 72h1v1h-1zM54 72h3v1h-3zM58 72h3v1h-3zM62 72h3v1h-3zM66 72h1v1h-1zM84 72h1v1h-1zM86 72h3v1h-3zM0 73h2v1h-2zM20 73h14v1h-14zM52 73h14v1h-14zM84 73h6v1h-6zM0 74h2v1h-2zM20 74h3v1h-3zM24 74h3v1h-3zM28 74h3v1h-3zM32 74h2v1h-2zM52 74h3v1h-3zM56 74h3v1h-3zM60 74h3v1h-3zM64 74h2v1h-2zM84 74h3v1h-3zM88 74h2v1h-2zM0 75h1v1h-1zM19 75h14v1h-14zM51 75h14v1h-14zM83 75h7v1h-7zM0 76h1v1h-1zM20 76h1v1h-1zM22 76h3v1h-3zM26 76h3v1h-3zM30 76h3v1h-3zM52 76h1v1h-1zM54 76h3v1h-3zM58 76h3v1h-3zM62 76h3v1h-3zM84 76h1v1h-1zM86 76h3v1h-3zM22 77h10v1h-10zM54 77h10v1h-10zM86 77h4v1h-4zM24 78h3v1h-3zM28 78h3v1h-3zM56 78h3v1h-3zM60 78h3v1h-3zM88 78h2v1h-2zM26 79h5v1h-5zM58 79h5v1h-5zM28 80h1v1h-1zM30 80h1v1h-1zM60 80h1v1h-1zM62 80h1v1h-1zM12 90h1v1h-1zM44 90h1v1h-1zM76 90h1v1h-1zM11 91h4v1h-4zM43 91h4v1h-4zM75 91h4v1h-4zM10 92h3v1h-3zM14 92h3v1h-3zM42 92h3v1h-3zM46 92h3v1h-3zM74 92h3v1h-3zM78 92h3v1h-3zM10 93h9v1h-9zM42 93h9v1h-9zM74 93h9v1h-9zM9 94h2v1h-2zM12 94h3v1h-3zM16 94h3v1h-3zM20 94h1v1h-1zM41 94h2v1h-2zM44 94h3v1h-3zM48 94h3v1h-3zM52 94h1v1h-1zM73 94h2v1h-2zM76 94h3v1h-3zM80 94h3v1h-3zM84 94h1v1h-1zM9 95h14v1h-14zM41 95h14v1h-14zM73 95h14v1h-14zM8 96h1v1h-1zM10 96h3v1h-3zM14 96h3v1h-3zM18 96h3v1h-3zM22 96h1v1h-1zM40 96h1v1h-1zM42 96h3v1h-3zM46 96h3v1h-3zM50 96h3v1h-3zM54 96h1v1h-1zM72 96h1v1h-1zM74 96h3v1h-3zM78 96h3v1h-3zM82 96h3v1h-3zM86 96h1v1h-1zM8 97h14v1h-14zM40 97h14v1h-14zM72 97h14v1h-14zM8 98h3v1h-3zM12 98h3v1h-3zM16 98h3v1h-3zM20 98h2v1h-2zM40 98h3v1h-3zM44 98h3v1h-3zM48 98h3v1h-3zM52 98h2v1h-2zM72 98h3v1h-3zM76 98h3v1h-3zM80 98h3v1h-3zM84 98h2v1h-2zM7 99h14v1h-14zM39 99h14v1h-14zM71 99h14v1h-14zM6 100h3v1h-3zM10 100h3v1h-3zM14 100h3v1h-3zM18 100h3v1h-3zM38 100h3v1h-3zM42 100h3v1h-3zM46 100h3v1h-3zM50 100h3v1h-3zM70 100h3v1h-3zM74 100h3v1h-3zM78 100h3v1h-3zM82 100h3v1h-3zM6 101h14v1h-14zM38 101h14v1h-14zM70 101h14v1h-14zM8 102h3v1h-3zM12 102h3v1h-3zM16 102h3v1h-3zM40 102h3v1h-3zM44 102h3v1h-3zM48 102h3v1h-3zM72 102h3v1h-3zM76 102h3v1h-3zM80 102h3v1h-3zM10 103h9v1h-9zM42 103h9v1h-9zM74 103h9v1h-9zM12 104h1v1h-1zM14 104h3v1h-3zM18 104h1v1h-1zM44 104h1v1h-1zM46 104h3v1h-3zM50 104h1v1h-1zM76 104h1v1h-1zM78 104h3v1h-3zM82 104h1v1h-1zM14 105h4v1h-4zM46 105h4v1h-4zM78 105h4v1h-4zM16 106h2v1h-2zM48 106h2v1h-2zM80 106h2v1h-2zM0 116h1v1h-1zM30 116h3v1h-3zM62 116h3v1h-3zM0 117h3v1h-3zM30 117h5v1h-5zM62 117h5v1h-5zM0 118h3v1h-3zM4 118h1v1h-1zM29 118h2v1h-2zM32 118h3v1h-3zM36 118h1v1h-1zM61 118h2v1h-2zM64 118h3v1h-3zM68 118h1v1h-1zM0 119h7v1h-7zM29 119h10v1h-10zM61 119h10v1h-10zM0 120h1v1h-1zM2 120h3v1h-3zM6 120h3v1h-3zM28 120h1v1h-1zM30 120h3v1h-3zM34 120h3v1h-3zM38 120h3v1h-3zM60 120h1v1h-1zM62 120h3v1h-3zM66 120h3v1h-3zM70 120h3v1h-3zM0 121h10v1h-10zM28 121h14v1h-14zM60 121h14v1h-14zM0 122h3v1h-3zM4 122h3v1h-3zM8 122h2v1h-2zM28 122h3v1h-3zM32 122h3v1h-3zM36 122h3v1h-3zM40 122h2v1h-2zM60 122h3v1h-3zM64 122h3v1h-3zM68 122h3v1h-3zM72 122h2v1h-2zM0 123h9v1h-9zM27 123h14v1h-14zM59 123h14v1h-14zM0 124h1v1h-1zM2 124h3v1h-3zM6 124h3v1h-3zM26 124h3v1h-3zM30 124h3v1h-3zM34 124h3v1h-3zM38 124h3v1h-3zM58 124h3v1h-3zM62 124h3v1h-3zM66 124h3v1h-3zM70 124h3v1h-3zM0 125h8v1h-8zM26 125h14v1h-14zM58 125h14v1h-14zM0 126h3v1h-3zM4 126h3v1h-3zM25 126h2v1h-2zM28 126h3v1h-3zM32 126h3v1h-3zM36 126h3v1h-3zM57 126h2v1h-2zM60 126h3v1h-3zM64 126h3v1h-3zM68 126h3v1h-3zM89 126h1v1h-1zM0 127h7v1h-7zM26 127h13v1h-13zM58 127h13v1h-13zM0 128h1v1h-1zM2 128h3v1h-3zM6 128h1v1h-1zM28 128h1v1h-1zM30 128h3v1h-3zM34 128h3v1h-3zM38 128h1v1h-1zM60 128h1v1h-1zM62 128h3v1h-3zM66 128h3v1h-3zM70 128h1v1h-1zM0 129h6v1h-6zM30 129h8v1h-8zM62 129h8v1h-8zM0 130h3v1h-3zM4 130h2v1h-2zM32 130h3v1h-3zM36 130h2v1h-2zM64 130h3v1h-3zM68 130h2v1h-2zM2 131h3v1h-3zM34 131h3v1h-3zM66 131h3v1h-3zM4 132h1v1h-1zM36 132h1v1h-1zM68 132h1v1h-1zM18 141h1v1h-1zM50 141h1v1h-1zM82 141h1v1h-1zM17 142h2v1h-2zM20 142h1v1h-1zM49 142h2v1h-2zM52 142h1v1h-1zM81 142h2v1h-2zM84 142h1v1h-1zM17 143h6v1h-6zM49 143h6v1h-6zM81 143h6v1h-6zM16 144h1v1h-1zM18 144h3v1h-3zM22 144h3v1h-3zM48 144h1v1h-1zM50 144h3v1h-3zM54 144h3v1h-3zM80 144h1v1h-1zM82 144h3v1h-3zM86 144h3v1h-3zM16 145h11v1h-11zM48 145h11v1h-11zM80 145h10v1h-10zM16 146h3v1h-3zM20 146h3v1h-3zM24 146h3v1h-3zM28 146h1v1h-1zM48 146h3v1h-3zM52 146h3v1h-3zM56 146h3v1h-3zM60 146h1v1h-1zM80 146h3v1h-3zM84 146h3v1h-3zM88 146h2v1h-2zM15 147h14v1h-14zM47 147h14v1h-14zM79 147h11v1h-11zM14 148h3v1h-3zM18 148h3v1h-3zM22 148h3v1h-3zM26 148h3v1h-3zM46 148h3v1h-3zM50 148h3v1h-3zM54 148h3v1h-3zM58 148h3v1h-3zM78 148h3v1h-3zM82 148h3v1h-3zM86 148h3v1h-3zM14 149h14v1h-14zM46 149h14v1h-14zM78 149h12v1h-12zM13 150h2v1h-2zM16 150h3v1h-3zM20 150h3v1h-3zM24 150h3v1h-3zM45 150h2v1h-2zM48 150h3v1h-3zM52 150h3v1h-3zM56 150h3v1h-3zM77 150h2v1h-2zM80 150h3v1h-3zM84 150h3v1h-3zM88 150h2v1h-2zM13 151h14v1h-14zM45 151h14v1h-14zM77 151h13v1h-13zM12 152h1v1h-1zM14 152h3v1h-3zM18 152h3v1h-3zM22 152h3v1h-3zM26 152h1v1h-1zM44 152h1v1h-1zM46 152h3v1h-3zM50 152h3v1h-3zM54 152h3v1h-3zM58 152h1v1h-1zM76 152h1v1h-1zM78 152h3v1h-3zM82 152h3v1h-3zM86 152h3v1h-3zM14 153h12v1h-12zM46 153h12v1h-12zM78 153h12v1h-12zM16 154h3v1h-3zM20 154h3v1h-3zM24 154h2v1h-2zM48 154h3v1h-3zM52 154h3v1h-3zM56 154h2v1h-2zM80 154h3v1h-3zM84 154h3v1h-3zM88 154h2v1h-2zM18 155h7v1h-7zM50 155h7v1h-7zM82 155h7v1h-7zM20 156h1v1h-1zM22 156h3v1h-3zM52 156h1v1h-1zM54 156h3v1h-3zM84 156h1v1h-1zM86 156h3v1h-3zM22 157h2v1h-2zM54 157h2v1h-2zM86 157h2v1h-2z"/></g></defs><use href="#pimg" x="0.000" y="0.000" opacity="1.0000"/><use href="#pimg" x="-0.292" y="-0.292" opacity="0.5000"/><use href="#pimg" x="0.000" y="-0.292" opacity="0.3333"/><use href="#pimg" x="0.292" y="-0.292" opacity="0.2500"/><use href="#pimg" x="-0.292" y="0.000" opacity="0.2000"/><use href="#pimg" x="0.292" y="0.000" opacity="0.1667"/><use href="#pimg" x="-0.292" y="0.292" opacity="0.1429"/><use href="#pimg" x="0.000" y="0.292" opacity="0.1250"/><use href="#pimg" x="0.292" y="0.292" opacity="0.1111"/></svg>
<span class="t" style="transform:scaleX(0.836);left:699px;top:467px;font-size:9.8px;color:#222;-webkit-text-stroke:0.42px #222;">Canvas Size</span>
<div style="left:749.7px;top:464.7px;width:143.8px;height:14px;background:#c3c3c5;outline:1px dotted #444;outline-offset:-1px;"></div>
<span class="t" style="transform:scaleX(1.016);left:752.5px;top:467px;font-size:9.8px;color:#222;-webkit-text-stroke:0.42px #222;">Portrait (tiny)</span>
<svg style="left:882.5px;top:468px" width="8" height="7" viewBox="0 0 8 7"><path d="M1.3 1.6 L4 4.6 L6.7 1.6" fill="none" stroke="#222" stroke-width="1.3"/></svg>
<span class="t" style="transform:scaleX(0.833);left:897px;top:467px;font-size:9.8px;color:#222;-webkit-text-stroke:0.42px #222;">90 × 160</span>
<div style="left:699px;top:482.8px;width:78.5px;height:18.8px;background:#c8c6c7;outline:1px dotted #444;outline-offset:-1px;"></div>
<span class="t" style="transform:scaleX(0.886);left:700.3px;top:488px;font-size:9.8px;color:#222;-webkit-text-stroke:0.42px #222;">Is Animation</span>
<div style="left:753px;top:487px;width:22.5px;height:11.5px;background:#23262a;border-radius:3px;"></div>
<div style="left:754.3px;top:488.3px;width:19.9px;height:8.9px;background:#6c645b;border-radius:2px;"></div>
<div style="left:754.3px;top:488.3px;width:9.7px;height:8.9px;background:#e2e2e2;border-radius:2px;"></div>
<span class="t" style="transform:scaleX(0.858);left:804.5px;top:488px;font-size:9.8px;color:#222;-webkit-text-stroke:0.42px #222;">0 Frames</span>
<span class="t" style="transform:scaleX(0.734);left:896.6px;top:488px;font-size:9.8px;color:#222;-webkit-text-stroke:0.42px #222;">0 FPS</span>
<div style="left:782px;top:499px;width:71px;height:1.6px;background:#dcd4cc;"></div>
<div style="left:858px;top:499px;width:71px;height:1.6px;background:#dcd4cc;"></div>
<svg style="left:843.5px;top:484px" width="7" height="16" viewBox="0 0 7 16"><path d="M1.1 4.8 L3.5 2.2 L5.9 4.8" fill="none" stroke="#2a2a2a" stroke-width="1.2"/><path d="M1.1 11 L3.5 13.6 L5.9 11" fill="none" stroke="#bdb5ae" stroke-width="1.2"/></svg>
<svg style="left:919.8px;top:484px" width="7" height="16" viewBox="0 0 7 16"><path d="M1.1 4.8 L3.5 2.2 L5.9 4.8" fill="none" stroke="#2a2a2a" stroke-width="1.2"/><path d="M1.1 11 L3.5 13.6 L5.9 11" fill="none" stroke="#bdb5ae" stroke-width="1.2"/></svg>
<div style="left:699px;top:505px;width:231.3px;height:14.8px;background:#c4c8d0;outline:1px dotted #444;outline-offset:-1px;"></div>
<span class="t" style="transform:scaleX(0.884);left:784px;top:505px;font-size:11px;color:#b4b7be;text-shadow:-1px 0 #4a4a4e,1px 0 #4a4a4e,0 -1px #4a4a4e,0 1px #4a4a4e,-.7px -.7px #4a4a4e,.7px .7px #4a4a4e,-.7px .7px #4a4a4e,.7px -.7px #4a4a4e;">Alpha Version 008 (January 2025)</span>
<span class="t" style="transform:scaleX(0.697);left:780px;top:508px;font-size:10px;color:#222;font-weight:bold;-webkit-text-stroke:0.2px #222;">EXPORT PICTURE...</span>
<span class="t" style="transform:scaleX(0.885);left:730px;top:8px;font-size:9.3px;color:#d4d4d4;-webkit-text-stroke:0.35px #d4d4d4;">Cubist Bossa</span>
<div style="left:701.5px;top:8px;width:5.5px;height:7px;background:#efe9dc;"></div>
<svg style="left:716px;top:7.5px" width="9" height="8" viewBox="0 0 9 8"><path d="M1 1 L4 4 L1 7 M5 1 L8 4 L5 7" fill="none" stroke="#e6e6e6" stroke-width="1.5"/></svg>
<span class="t" style="transform:scaleX(0.845);left:880px;top:2px;font-size:9.6px;color:#e6e6e6;-webkit-text-stroke:0.3px #e6e6e6;">THU 2025.1.23</span>
<span class="t" style="transform:scaleX(0.864);left:899.5px;top:13px;font-size:9.6px;color:#e6e6e6;-webkit-text-stroke:0.3px #e6e6e6;">08:48 PM</span>
<svg style="left:7px;top:2px" width="20" height="20" viewBox="0 0 20 20" ><rect x="1.5" y="1.5" width="16.6" height="17" rx="1.5" fill="none" stroke="#a9a9a9" stroke-width="1.2"/>
<rect x="3.8" y="3.6" width="12" height="9.3" rx="0.8" fill="none" stroke="#a9a9a9" stroke-width="1.1"/>
<path d="M6 9.5 Q6.5 6.5 9.3 5.8" fill="none" stroke="#a9a9a9" stroke-width="1.1"/>
<path d="M3.8 15.7 H15.8" stroke="#a9a9a9" stroke-width="1.2"/></svg>
<svg style="left:39px;top:1px" width="20" height="20" viewBox="0 0 20 20" ><path d="M18.28 8.28 L18.28 12.12 L16.00 12.12 L14.71 14.35 L15.85 16.32 L12.53 18.24 L11.39 16.26 L8.81 16.26 L7.67 18.24 L4.35 16.32 L5.49 14.35 L4.20 12.12 L1.92 12.12 L1.92 8.28 L4.20 8.28 L5.49 6.05 L4.35 4.08 L7.67 2.16 L8.81 4.14 L11.39 4.14 L12.53 2.16 L15.85 4.08 L14.71 6.05 L16.00 8.28Z" fill="none" stroke="#a9a9a9" stroke-width="1.2" stroke-linejoin="round" transform="rotate(30 10.1 10.2)"/><circle cx="10.1" cy="10.2" r="2.4" fill="none" stroke="#a9a9a9" stroke-width="1.2"/></svg>
<svg style="left:72px;top:2px" width="20" height="20" viewBox="0 0 20 20" ><path d="M1.9 1.5 H18 V15 L14.5 18.6 H1.9 Z" fill="none" stroke="#a9a9a9" stroke-width="1.2"/>
<path d="M14.5 18.6 V15 H18" fill="none" stroke="#a9a9a9" stroke-width="1.1"/>
<path d="M9.6 5.3 V12.3 M6.1 8.8 H13.1" stroke="#a9a9a9" stroke-width="2.2"/><rect x="8.6" y="7.8" width="2" height="2" fill="#2f2f2f"/></svg>
<svg style="left:390px;top:0px" width="22" height="24" viewBox="0 0 22 24" ><path d="M1.9 3.2 L11.4 0.8 Q12.6 0.6 13.6 1.2 L19.6 4.9 Q20.3 5.4 20.3 6.4 V17.6 Q20.3 18.4 19.4 18.7 L12.6 20.3 Q11.8 20.4 11 20 L2.6 15.8 Q1.9 15.4 1.9 14.6 Z" fill="#10397c"/>
<path d="M2.7 3.8 L11.8 7 V19.3 L2.7 14.9 Z" fill="#2f7fd8"/>
<path d="M2.7 3.7 L11.5 1.5 Q12.5 1.3 13.3 1.8 L19.3 5.4 L11.9 7 Z" fill="#50bef3"/>
<path d="M12.6 7 L19.5 5.6 V17.6 L12.6 19.3 Z" fill="#2c8be2"/>
<path d="M2.7 5.2 L11.8 8.4 V9.9 L2.7 6.7Z" fill="#55c0f4"/>
<path d="M2.7 9.2 L11.8 12.4 V14 L2.7 10.8Z" fill="#a9b0f2"/>
<path d="M2.7 12.6 L11.8 15.8 V17.2 L2.7 14Z" fill="#55c0f4"/>
<circle cx="16.2" cy="11.6" r="2.4" fill="#164c9c"/><circle cx="16.2" cy="11.6" r="1" fill="#6ccaf6"/>
<path d="M13 17.6 L19.2 16 V17.4 L13 19Z" fill="#62c4f4"/>
<rect x="1.1" y="11.2" width="4.4" height="4.2" fill="#e42c7c"/>
<circle cx="8.5" cy="22.3" r="1.1" fill="#ee7a7a"/><circle cx="12.3" cy="22.3" r="1.1" fill="#ee7a7a"/></svg>
<svg style="left:422px;top:0px" width="28" height="24" viewBox="0 0 28 24" ><polygon points="8.20,1.30 15.00,4.30 8.20,7.30 1.40,4.30" fill="#f8d848" stroke="#2a2010" stroke-width="0.8" stroke-linejoin="round"/><polygon points="1.40,4.30 8.20,7.30 8.20,13.30 1.40,10.30" fill="#f09a30" stroke="#2a2010" stroke-width="0.8" stroke-linejoin="round"/><polygon points="8.20,7.30 15.00,4.30 15.00,10.30 8.20,13.30" fill="#f8e878" stroke="#2a2010" stroke-width="0.8" stroke-linejoin="round"/><rect x="18.5" y="2" width="7.8" height="8.5" fill="#e6f0e6" stroke="#2a3a2a" stroke-width="0.6"/>
<path d="M20 6 L21.8 8.3 L25 3.2" fill="none" stroke="#38a848" stroke-width="1.5"/>
<rect x="2" y="12.8" width="24.3" height="10.6" fill="#22314d"/>
<path d="M2 14.4H26.3M2 17.2H26.3M2 20H26.3M2 22.7H26.3" stroke="#35579c" stroke-width="1.4"/></svg>
<svg style="left:457px;top:0px" width="27" height="24" viewBox="0 0 27 24" ><polygon points="13.30,0.40 19.20,3.10 13.30,5.80 7.40,3.10" fill="#f8e478" stroke="#2a2010" stroke-width="0.8" stroke-linejoin="round"/><polygon points="7.40,3.10 13.30,5.80 13.30,11.20 7.40,8.50" fill="#f0a434" stroke="#2a2010" stroke-width="0.8" stroke-linejoin="round"/><polygon points="13.30,5.80 19.20,3.10 19.20,8.50 13.30,11.20" fill="#f2d244" stroke="#2a2010" stroke-width="0.8" stroke-linejoin="round"/><polygon points="7.50,10.30 13.70,13.60 7.50,16.90 1.30,13.60" fill="#c42a84" stroke="#3a1020" stroke-width="0.8" stroke-linejoin="round"/><polygon points="1.30,13.60 7.50,16.90 7.50,23.50 1.30,20.20" fill="#e6244e" stroke="#3a1020" stroke-width="0.8" stroke-linejoin="round"/><polygon points="7.50,16.90 13.70,13.60 13.70,20.20 7.50,23.50" fill="#c41a48" stroke="#3a1020" stroke-width="0.8" stroke-linejoin="round"/><polygon points="20.20,11.20 25.60,14.27 20.20,17.35 14.80,14.27" fill="#5cd09c" stroke="#10301c" stroke-width="0.8" stroke-linejoin="round"/><polygon points="14.80,14.27 20.20,17.35 20.20,23.50 14.80,20.43" fill="#808488" stroke="#10301c" stroke-width="0.8" stroke-linejoin="round"/><polygon points="20.20,17.35 25.60,14.27 25.60,20.43 20.20,23.50" fill="#30a868" stroke="#10301c" stroke-width="0.8" stroke-linejoin="round"/></svg>
<svg style="left:486px;top:0px" width="36" height="24" viewBox="0 0 36 24" ><rect x="1.8" y="0" width="32.2" height="3.2" fill="#ec2868"/>
<rect x="6.3" y="2.4" width="23" height="14.4" fill="#1c1c34"/>
<rect x="7.5" y="3.3" width="6" height="5.8" fill="#2854d4"/><rect x="15" y="3.3" width="6" height="5.8" fill="#3aa4ea"/><rect x="22.4" y="3.3" width="6" height="5.8" fill="#2aa272"/>
<rect x="7.5" y="10.3" width="6" height="5.8" fill="#e22a5a"/><rect x="15" y="10.3" width="6" height="5.8" fill="#f0823a"/>
<rect x="22.6" y="12.6" width="7" height="7" fill="#f8da3a" stroke="#5a4610" stroke-width="0.9" transform="rotate(28 26.1 16.1)"/></svg>
<svg style="left:524px;top:0px" width="30" height="25" viewBox="0 0 30 25" ><path d="M9 0 H21.5 Q23.8 0 23.8 2.3 V10.7 Q23.8 13 21.5 13 H11.5 L8.3 16.8 L8.8 13 Q7 12.8 7 10.7 V2.3 Q7 0 9 0Z" fill="#f6f6f6"/><polygon points="15.40,1.40 20.60,4.05 15.40,6.70 10.20,4.05" fill="#ecc860" stroke="#4a3210" stroke-width="0.8" stroke-linejoin="round"/><polygon points="10.20,4.05 15.40,6.70 15.40,12.00 10.20,9.35" fill="#d8902e" stroke="#4a3210" stroke-width="0.8" stroke-linejoin="round"/><polygon points="15.40,6.70 20.60,4.05 20.60,9.35 15.40,12.00" fill="#c4842a" stroke="#4a3210" stroke-width="0.8" stroke-linejoin="round"/><circle cx="6.5" cy="14.3" r="2.4" fill="#0d0d0d"/><path d="M2 24.5 V20 Q2 17.3 4.5 17.3 H8.5 Q11 17.3 11 20 V24.5Z" fill="#0d0d0d"/>
<circle cx="24" cy="14.3" r="2.4" fill="#0d0d0d"/><path d="M19.5 24.5 V20 Q19.5 17.3 22 17.3 H26 Q28.5 17.3 28.5 20 V24.5Z" fill="#0d0d0d"/></svg>
</div></body></html>
